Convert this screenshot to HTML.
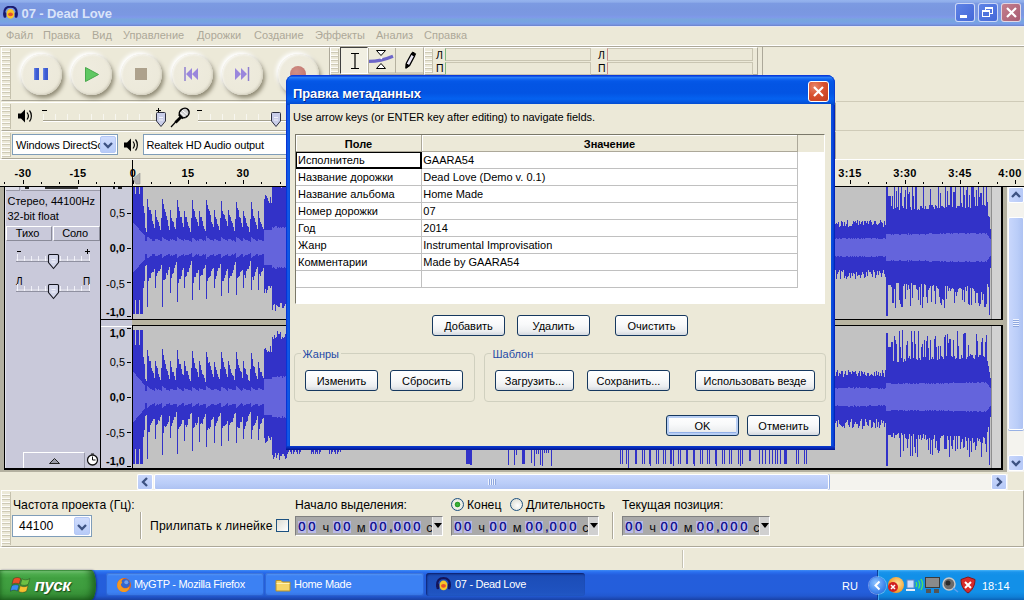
<!DOCTYPE html>
<html><head><meta charset="utf-8"><title>07 - Dead Love</title>
<style>
*{box-sizing:border-box;margin:0;padding:0}
html,body{width:1024px;height:600px;overflow:hidden;background:#ece9d8;font-family:"Liberation Sans",sans-serif;font-size:11px;color:#000}
.a{position:absolute}
#root{position:absolute;left:0;top:0;width:1024px;height:600px;overflow:hidden;background:#ece9d8}
/* title bar */
#tb{left:0;top:0;width:1024px;height:26px;background:linear-gradient(#95b3ee 0,#8fadea 2px,#7c9ae2 3.5px,#7a97e0 9px,#7b98e2 15px,#8099ea 17px,#78a5dd 19.5px,#77a3e3 22px,#7b9ce8 24px,#6f88d2 25.5px,#7088d2 26px)}
#tb .t{left:22px;top:5px;font-weight:bold;font-size:13px;color:#d9e4f9;letter-spacing:0px;white-space:nowrap}
.cb{top:3px;width:20px;height:19px;border:1px solid rgba(235,240,252,.8);border-radius:3px}
/* menu */
#menu{left:0;top:26px;width:1024px;height:20px;background:#ece9d8}
#menu span{position:absolute;top:3px;color:#aca899;font-size:11px;white-space:nowrap}
/* toolbars */
.tbar{border-top:1px solid #fff;border-left:1px solid #fff;border-right:1px solid #aca899;border-bottom:1px solid #aca899;background:#ece9d8}
.grab{background:repeating-linear-gradient(#ece9d8 0,#ece9d8 2px,#fdfcf8 2px,#fdfcf8 3px,#cdc9b6 3px,#cdc9b6 4px);border-right:1px solid #c5c1ad}
.rb{width:41px;height:41px;border-radius:50%;background:radial-gradient(circle at 40% 38%,#efecdf 0,#ece9da 70%,#e6e3d2 100%);box-shadow:2px 3px 4px rgba(120,115,92,.8),-2px -2px 4px rgba(255,255,255,1),-1px -1px 2px rgba(255,255,255,.9),inset -1px -1px 2px rgba(160,155,135,.35),inset 1px 1px 2px rgba(255,255,255,.7)}
.combo{background:#fff;border:1px solid #7f9db9;font-size:11px;white-space:nowrap;overflow:hidden}
.combo .dd{position:absolute;right:1px;top:1px;bottom:1px;width:16px;background:linear-gradient(#cfdcfd,#b7cbf8);border-radius:2px;border:1px solid #b5c8f5}
/* tracks */
.wv{position:absolute;left:0;top:0}
.xpbtn{position:absolute;height:21px;border:1px solid #16385f;border-radius:3px;background:linear-gradient(#fff 0,#f8f9fa 45%,#eceef0 80%,#d4d9e0 100%);font-size:11px;text-align:center;line-height:20.5px;white-space:nowrap}
.grp{position:absolute;border:1px solid #d0d0bf;border-radius:4px}
.grp b{position:absolute;top:-6px;left:5.5px;background:#ece9d8;padding:0 2px;color:#1f49a6;line-height:12px;font-weight:normal;font-size:11px}
.row{position:absolute;left:0;height:17px;width:501px;border-bottom:1px solid #c0c0c0;font-size:11px;line-height:16px;white-space:nowrap}
.row i{position:absolute;left:2px;font-style:normal}
.row u{position:absolute;left:127.3px;text-decoration:none}
.tc{position:absolute;height:20px;background:#a9a9a9;border:1px solid #808080;border-right-color:#fff;border-bottom-color:#fff}
.tc b{position:absolute;top:4.2px;width:8.2px;height:12px;font-weight:normal;font-size:13px;line-height:12px;text-align:center;color:#15158f;background:#b9b9e6;text-shadow:0 0 .5px #15158f}
.tc span.k{position:absolute;top:2.5px;font-size:13px;line-height:16px;color:#111}
.tc .d{position:absolute;right:0;top:0;width:9px;height:18px;background:#d0d0d0;box-shadow:-1px 0 0 #e8e8e8}
.tskb{position:absolute;top:573px;height:23px;border-radius:3px;background:linear-gradient(#5c9bf5 0,#3c81f3 3px,#3c81f3 19px,#3572e0 23px);color:#fff;font-size:11px;line-height:23px;letter-spacing:-.3px;white-space:nowrap;box-shadow:inset 0 0 0 1px rgba(20,60,170,.35)}

</style></head>
<body>
<div id="root">
<!-- ===== main title bar (inactive) ===== -->
<div id="tb" class="a">
  <svg class="a" style="left:3px;top:6px" width="15" height="14" viewBox="0 0 17 16">
    <path d="M1.5 11 C0.5 3 4 0.8 8.5 0.8 C13 0.8 16.5 3 15.5 11" fill="none" stroke="#1a1a70" stroke-width="2.4"/>
    <ellipse cx="8.5" cy="9" rx="4.6" ry="5.6" fill="#f6c62a"/>
    <ellipse cx="8.5" cy="9.5" rx="2.8" ry="2.2" fill="#e8502a"/>
    <rect x="0.5" y="7" width="3.2" height="6.5" rx="1.5" fill="#1a1a70"/>
    <rect x="13.3" y="7" width="3.2" height="6.5" rx="1.5" fill="#1a1a70"/>
  </svg>
  <div class="a t" style="left:21.5px;top:5.5px;letter-spacing:-.1px">07 - Dead Love</div>
  <div class="a cb" style="left:955px;background:linear-gradient(135deg,#5f83e6,#4468d8)"><div class="a" style="left:4px;top:11px;width:7px;height:3px;background:#fff"></div></div>
  <div class="a cb" style="left:978px;background:linear-gradient(135deg,#5f83e6,#4468d8)">
    <div class="a" style="left:6px;top:3px;width:8px;height:7px;border:1px solid #fff;border-top-width:2px"></div>
    <div class="a" style="left:3px;top:6px;width:8px;height:7px;border:1px solid #fff;border-top-width:2px;background:#4f73de"></div>
  </div>
  <div class="a cb" style="left:1001px;background:linear-gradient(135deg,#c47f8e,#a85c72)">
    <svg class="a" style="left:2.5px;top:2px" width="13" height="13"><path d="M2 2L11 11M11 2L2 11" stroke="#fff" stroke-width="2.2"/></svg>
  </div>
</div>
<div class="a" style="left:0;top:26px;width:1024px;height:1px;background:#e6e8f3;z-index:1"></div>
<!-- ===== menu ===== -->
<div id="menu" class="a">
  <span style="left:6px">Файл</span><span style="left:43px">Правка</span><span style="left:92px">Вид</span><span style="left:123px">Управление</span><span style="left:197px">Дорожки</span><span style="left:254px">Создание</span><span style="left:315px">Эффекты</span><span style="left:376px">Анализ</span><span style="left:424px">Справка</span>
</div>
<div class="a" style="left:0;top:45px;width:1024px;height:1px;background:#fff"></div>
<div class="a" style="left:0;top:46px;width:1024px;height:1px;background:#aca899"></div>

<!-- ===== transport toolbar ===== -->
<div class="a tbar" style="left:1px;top:47px;width:329px;height:54px"></div>
<div class="a grab" style="left:2px;top:49px;width:9px;height:50px"></div>
<div class="a rb" style="left:20.5px;top:54px"><div class="a" style="left:13.5px;top:14px;width:5px;height:12px;background:linear-gradient(90deg,#6f8ae6,#3f5fd6 40%,#3a57cc)"></div><div class="a" style="left:22px;top:14px;width:5px;height:12px;background:linear-gradient(90deg,#6f8ae6,#3f5fd6 40%,#3a57cc)"></div></div>
<div class="a rb" style="left:70.5px;top:54px"><svg class="a" style="left:13px;top:12px" width="16" height="17"><path d="M1.5 1.5L14.5 8.5L1.5 15.5Z" fill="#5fc862" stroke="#49a84d" stroke-width="1"/></svg></div>
<div class="a rb" style="left:121.0px;top:54px"><div class="a" style="left:14px;top:14px;width:12px;height:12px;background:#ada18c"></div></div>
<div class="a rb" style="left:171.5px;top:54px"><svg class="a" style="left:12px;top:13px" width="16" height="14"><path d="M1 0V14" stroke="#8f7fd0" stroke-width="1.5"/><path d="M8 1L2 7L8 13Z M14 1L8 7L14 13Z" fill="#9a86dc"/></svg></div>
<div class="a rb" style="left:221.7px;top:54px"><svg class="a" style="left:12px;top:13px" width="16" height="14"><path d="M14.5 0V14" stroke="#8f7fd0" stroke-width="1.5"/><path d="M1 1L7 7L1 13Z M7 1L13 7L7 13Z" fill="#9a86dc"/></svg></div>
<div class="a rb" style="left:278.4px;top:54px"><div class="a" style="left:12px;top:12px;width:16px;height:16px;border-radius:50%;background:radial-gradient(circle at 40% 35%,#d08f86,#bf6f68)"></div></div>

<!-- tools toolbar -->
<div class="a tbar" style="left:330px;top:47px;width:94px;height:28px"></div>
<div class="a grab" style="left:331px;top:49px;width:8px;height:24px"></div>
<div class="a" style="left:340px;top:47px;width:28px;height:27px;border:1px solid #404040;border-right-color:#fff;border-bottom-color:#fff;background:#f1efe2"></div>
<svg class="a" style="left:340px;top:47px" width="84" height="28" viewBox="0 0 84 28">
  <path d="M28.5 1V26H55.5V1M55.5 26H83.5V1" stroke="#b5b1a0" stroke-width="1" fill="none"/>
  <path d="M11 6.5H19M11 21.5H19M15 6.5V21.5" stroke="#000" stroke-width="1.2" fill="none"/>
  <path d="M29 14.3C37 14.3 44 13 53 9.2" stroke="#6d66c9" stroke-width="3.2" fill="none"/>
  <path d="M36.5 3.5H45.5L41 8.5Z M36.5 21.5H45.5L41 16.5Z" fill="#fff" stroke="#000" stroke-width="1"/>
  <circle cx="41.3" cy="11.3" r="1" fill="#fff"/>
  <path d="M66 21L66.3 16.2L71.3 7L74.6 9L69.6 18.4Z" fill="#ebe8f6" stroke="#000" stroke-width="1.3" stroke-linejoin="round"/>
  <path d="M66 21L66.3 16.8L69.3 18.6Z M71.3 7L72.6 5L75.6 6.8L74.6 9Z" fill="#000" stroke="#000" stroke-width="1"/>
</svg>
<!-- meter toolbar -->
<div class="a tbar" style="left:424px;top:47px;width:334px;height:28px"></div>
<div class="a grab" style="left:425px;top:49px;width:8px;height:24px"></div>
<div class="a" style="left:436px;top:48.5px;font-size:10.5px;line-height:13.5px">Л<br>П</div>
<div class="a" style="left:445px;top:48px;width:146px;height:13px;border:1px solid #c9c5b2;border-left:1px solid #7fb77f;background:#ebe8d7"></div>
<div class="a" style="left:445px;top:62px;width:146px;height:13px;border:1px solid #c9c5b2;border-left:1px solid #7fb77f;background:#ebe8d7"></div>
<div class="a" style="left:598px;top:48.5px;font-size:10.5px;line-height:13.5px">Л<br>П</div>
<div class="a" style="left:607px;top:48px;width:146px;height:13px;border:1px solid #c9c5b2;border-left:1px solid #c98a8a;background:#ebe8d7"></div>
<div class="a" style="left:607px;top:62px;width:146px;height:13px;border:1px solid #c9c5b2;border-left:1px solid #c98a8a;background:#ebe8d7"></div>
<div class="a" style="left:762px;top:47px;width:1px;height:28px;background:#aca899"></div>
<!-- right side faint lines (edit toolbar hidden etc) -->
<div class="a" style="left:836px;top:101px;width:188px;height:1px;background:#cfcbb8"></div>
<div class="a" style="left:836px;top:130px;width:188px;height:1px;background:#cfcbb8"></div>

<!-- ===== mixer toolbar ===== -->
<div class="a tbar" style="left:1px;top:102px;width:835px;height:29px"></div>
<div class="a grab" style="left:2px;top:104px;width:9px;height:25px"></div>
<svg class="a" style="left:17px;top:108px" width="17" height="16" viewBox="0 0 17 16">
  <path d="M1 5.5H4L8 1.5V14.5L4 10.5H1Z" fill="#000"/><path d="M10 4.5C11.6 6.5 11.6 9.5 10 11.5M12.5 2.5C15 5.5 15 10.5 12.5 13.5" stroke="#000" stroke-width="1.2" fill="none"/>
</svg>
<div class="a" style="left:42px;top:110px;width:5px;height:1px;background:#000"></div>
<div class="a" style="left:43px;top:114px;width:112px;height:7px;background:repeating-linear-gradient(90deg,#fff 0,#fff 1px,transparent 1px,transparent 12px);opacity:.6"></div>
<div class="a" style="left:43px;top:120px;width:114px;height:1px;background:#a5a18e"></div>
<div class="a" style="left:43px;top:121px;width:114px;height:1px;background:#fff"></div>
<div class="a" style="left:156px;top:110px;width:5px;height:1px;background:#000"></div><div class="a" style="left:158px;top:108px;width:1px;height:5px;background:#000"></div>
<svg class="a" style="left:155px;top:111px" width="13" height="17"><path d="M2.5 1.5H9.5Q10.5 1.5 10.5 2.5V10L6 15.5L1.5 10V2.5Q1.5 1.5 2.5 1.5Z" fill="#c9cde8" stroke="#2e3040" stroke-width="1"/><path d="M4 6.5H8M4 9H8" stroke="#f2f3fa"/></svg>
<svg class="a" style="left:170px;top:106px" width="22" height="22" viewBox="0 0 22 22"><path d="M1 21L7 14.5" stroke="#000" stroke-width="1.2"/><path d="M5.5 16.5L12 10" stroke="#000" stroke-width="2.8"/><ellipse cx="14.2" cy="7" rx="5.2" ry="4.4" transform="rotate(-40 14.2 7)" fill="#d0d0d0" stroke="#000" stroke-width="1.6"/><path d="M10.5 6.5L15.5 10.8M12 4.2L17.5 8.8" stroke="#fff" stroke-width="1"/><path d="M9 8.5L13 12.5" stroke="#000" stroke-width="2.2"/></svg>
<div class="a" style="left:197px;top:110px;width:5px;height:1px;background:#000"></div>
<div class="a" style="left:198px;top:114px;width:84px;height:7px;background:repeating-linear-gradient(90deg,#fff 0,#fff 1px,transparent 1px,transparent 12px);opacity:.6"></div>
<div class="a" style="left:198px;top:120px;width:88px;height:1px;background:#a5a18e"></div>
<div class="a" style="left:198px;top:121px;width:88px;height:1px;background:#fff"></div>
<svg class="a" style="left:270px;top:111px" width="13" height="17"><path d="M2.5 1.5H9.5Q10.5 1.5 10.5 2.5V10L6 15.5L1.5 10V2.5Q1.5 1.5 2.5 1.5Z" fill="#c9cde8" stroke="#2e3040" stroke-width="1"/><path d="M4 6.5H8M4 9H8" stroke="#f2f3fa"/></svg>

<!-- ===== device toolbar ===== -->
<div class="a tbar" style="left:1px;top:131px;width:835px;height:28px"></div>
<div class="a grab" style="left:2px;top:133px;width:9px;height:24px"></div>
<div class="a combo" style="left:12px;top:134px;width:106px;height:21px"><span class="a" style="left:3px;top:4px;letter-spacing:-.15px">Windows DirectSc</span><div class="dd"><svg class="a" style="left:2px;top:5px" width="10" height="7"><path d="M1 1L5 5L9 1" stroke="#3d5282" stroke-width="2.3" fill="none"/></svg></div></div>
<svg class="a" style="left:123px;top:137px" width="17" height="16" viewBox="0 0 17 16">
  <path d="M1 5.5H4L8 1.5V14.5L4 10.5H1Z" fill="#000"/><path d="M10 4.5C11.6 6.5 11.6 9.5 10 11.5M12.5 2.5C15 5.5 15 10.5 12.5 13.5" stroke="#000" stroke-width="1.2" fill="none"/>
</svg>
<div class="a combo" style="left:143px;top:134px;width:200px;height:21px"><span class="a" style="left:2.5px;top:4px;letter-spacing:-.13px">Realtek HD Audio output</span></div>

<!-- ===== time ruler ===== -->
<div class="a" style="left:0;top:159px;width:1024px;height:27px;background:#ece9d8;border-top:1px solid #fff"></div>
<div id="ruler" class="a" style="left:0;top:160px;width:1024px;height:26px;font-weight:bold;font-size:11px">
<div class="a" style="left:4px;top:22px;width:1px;height:2px;background:#000"></div>
<div class="a" style="left:23px;top:20px;width:1px;height:4px;background:#000"></div>
<div class="a" style="left:41px;top:22px;width:1px;height:2px;background:#000"></div>
<div class="a" style="left:59px;top:22px;width:1px;height:2px;background:#000"></div>
<div class="a rl" style="left:23px;top:6.5px;width:40px;margin-left:-20px;text-align:center;letter-spacing:.4px">-30</div>
<div class="a" style="left:78px;top:20px;width:1px;height:4px;background:#000"></div>
<div class="a" style="left:96px;top:22px;width:1px;height:2px;background:#000"></div>
<div class="a" style="left:114px;top:22px;width:1px;height:2px;background:#000"></div>
<div class="a rl" style="left:78px;top:6.5px;width:40px;margin-left:-20px;text-align:center;letter-spacing:.4px">-15</div>
<div class="a" style="left:133px;top:20px;width:1px;height:4px;background:#000"></div>
<div class="a" style="left:151px;top:22px;width:1px;height:2px;background:#000"></div>
<div class="a" style="left:170px;top:22px;width:1px;height:2px;background:#000"></div>
<div class="a rl" style="left:133px;top:6.5px;width:40px;margin-left:-20px;text-align:center;letter-spacing:.4px">0</div>
<div class="a" style="left:188px;top:20px;width:1px;height:4px;background:#000"></div>
<div class="a" style="left:206px;top:22px;width:1px;height:2px;background:#000"></div>
<div class="a" style="left:225px;top:22px;width:1px;height:2px;background:#000"></div>
<div class="a rl" style="left:188px;top:6.5px;width:40px;margin-left:-20px;text-align:center;letter-spacing:.4px">15</div>
<div class="a" style="left:243px;top:20px;width:1px;height:4px;background:#000"></div>
<div class="a" style="left:261px;top:22px;width:1px;height:2px;background:#000"></div>
<div class="a" style="left:280px;top:22px;width:1px;height:2px;background:#000"></div>
<div class="a rl" style="left:243px;top:6.5px;width:40px;margin-left:-20px;text-align:center;letter-spacing:.4px">30</div>
<div class="a" style="left:298px;top:20px;width:1px;height:4px;background:#000"></div>
<div class="a" style="left:317px;top:22px;width:1px;height:2px;background:#000"></div>
<div class="a" style="left:335px;top:22px;width:1px;height:2px;background:#000"></div>
<div class="a rl" style="left:298px;top:6.5px;width:40px;margin-left:-20px;text-align:center;letter-spacing:.4px">45</div>
<div class="a" style="left:353px;top:20px;width:1px;height:4px;background:#000"></div>
<div class="a" style="left:372px;top:22px;width:1px;height:2px;background:#000"></div>
<div class="a" style="left:390px;top:22px;width:1px;height:2px;background:#000"></div>
<div class="a" style="left:408px;top:20px;width:1px;height:4px;background:#000"></div>
<div class="a" style="left:427px;top:22px;width:1px;height:2px;background:#000"></div>
<div class="a" style="left:445px;top:22px;width:1px;height:2px;background:#000"></div>
<div class="a" style="left:464px;top:20px;width:1px;height:4px;background:#000"></div>
<div class="a" style="left:482px;top:22px;width:1px;height:2px;background:#000"></div>
<div class="a" style="left:500px;top:22px;width:1px;height:2px;background:#000"></div>
<div class="a" style="left:519px;top:20px;width:1px;height:4px;background:#000"></div>
<div class="a" style="left:537px;top:22px;width:1px;height:2px;background:#000"></div>
<div class="a" style="left:556px;top:22px;width:1px;height:2px;background:#000"></div>
<div class="a" style="left:574px;top:20px;width:1px;height:4px;background:#000"></div>
<div class="a" style="left:592px;top:22px;width:1px;height:2px;background:#000"></div>
<div class="a" style="left:611px;top:22px;width:1px;height:2px;background:#000"></div>
<div class="a" style="left:629px;top:20px;width:1px;height:4px;background:#000"></div>
<div class="a" style="left:647px;top:22px;width:1px;height:2px;background:#000"></div>
<div class="a" style="left:666px;top:22px;width:1px;height:2px;background:#000"></div>
<div class="a" style="left:684px;top:20px;width:1px;height:4px;background:#000"></div>
<div class="a" style="left:703px;top:22px;width:1px;height:2px;background:#000"></div>
<div class="a" style="left:721px;top:22px;width:1px;height:2px;background:#000"></div>
<div class="a" style="left:739px;top:20px;width:1px;height:4px;background:#000"></div>
<div class="a" style="left:758px;top:22px;width:1px;height:2px;background:#000"></div>
<div class="a" style="left:776px;top:22px;width:1px;height:2px;background:#000"></div>
<div class="a" style="left:794px;top:20px;width:1px;height:4px;background:#000"></div>
<div class="a" style="left:813px;top:22px;width:1px;height:2px;background:#000"></div>
<div class="a" style="left:831px;top:22px;width:1px;height:2px;background:#000"></div>
<div class="a" style="left:850px;top:20px;width:1px;height:4px;background:#000"></div>
<div class="a" style="left:868px;top:22px;width:1px;height:2px;background:#000"></div>
<div class="a" style="left:886px;top:22px;width:1px;height:2px;background:#000"></div>
<div class="a rl" style="left:850px;top:6.5px;width:40px;margin-left:-20px;text-align:center;letter-spacing:.4px">3:15</div>
<div class="a" style="left:905px;top:20px;width:1px;height:4px;background:#000"></div>
<div class="a" style="left:923px;top:22px;width:1px;height:2px;background:#000"></div>
<div class="a" style="left:942px;top:22px;width:1px;height:2px;background:#000"></div>
<div class="a rl" style="left:905px;top:6.5px;width:40px;margin-left:-20px;text-align:center;letter-spacing:.4px">3:30</div>
<div class="a" style="left:960px;top:20px;width:1px;height:4px;background:#000"></div>
<div class="a" style="left:978px;top:22px;width:1px;height:2px;background:#000"></div>
<div class="a" style="left:997px;top:22px;width:1px;height:2px;background:#000"></div>
<div class="a rl" style="left:960px;top:6.5px;width:40px;margin-left:-20px;text-align:center;letter-spacing:.4px">3:45</div>
<div class="a" style="left:1015px;top:20px;width:1px;height:4px;background:#000"></div>
<div class="a rl" style="left:1010px;top:6.5px;width:40px;margin-left:-20px;text-align:center;letter-spacing:.4px">4:00</div>
<div class="a" style="left:132px;top:0;width:1px;height:26px;background:#000"></div>
<svg class="a" style="left:133px;top:12.5px" width="8" height="12"><path d="M7 0V11H3L0 6Z" fill="#b0b0b0" stroke="#909090" stroke-width=".6"/></svg>
<div class="a" style="left:0;top:26px;width:1007px;height:1px;background:#000"></div>
</div>

<!-- ===== track area ===== -->
<div class="a" style="left:0;top:186px;width:1007px;height:286px;background:#b3b0a0"></div>
<div class="a" style="left:4px;top:186px;width:999px;height:284px;background:#000"></div>
<!-- label panel -->
<div class="a" style="left:5px;top:187px;width:95px;height:281px;background:#c9c9da;box-shadow:inset 1px 0 0 #e2e2ec"></div>
<!-- vruler -->
<div class="a" style="left:101px;top:187px;width:31px;height:132px;background:#cbccda"></div>
<div class="a" style="left:101px;top:320px;width:31px;height:6px;background:#c5c6d7"></div>
<div class="a" style="left:101px;top:326px;width:31px;height:1px;background:#fff"></div>
<div class="a" style="left:101px;top:327px;width:31px;height:141px;background:#cbccda"></div>
<!-- wave bg -->
<div class="a" style="left:133px;top:187px;width:868px;height:132px;background:#c2c2c2"></div>
<div class="a" style="left:132px;top:320px;width:871px;height:5px;background:#b9b5a2"></div>
<div class="a" style="left:133px;top:326px;width:868px;height:142px;background:#c2c2c2"></div>
<div class="a" style="left:991px;top:187px;width:10px;height:132px;background:#d2d2d2;border-left:1px solid #8f8f8f"></div><div class="a" style="left:991px;top:326px;width:10px;height:142px;background:#d2d2d2;border-left:1px solid #8f8f8f"></div>
<svg class="wv" width="1024" height="600" viewBox="0 0 1024 600" shape-rendering="crispEdges"><g transform="translate(0.5,0)" fill="none" stroke-width="1"><path stroke="#3232c8" d="M133 187V314M134 187V314M135 194V300M136 187V314M137 187V314M138 187V314M139 194V300M140 187V314M141 187V314M142 187V314M143 206V288M144 213V281M145 228V266M146 232V265M147 199V307M148 207V281M149 210V278M150 210V278M151 214V273M152 221V272M153 224V272M154 228V269M155 210V288M156 217V276M157 220V273M158 222V271M159 226V271M160 230V269M161 218V265M162 199V307M163 204V280M164 209V280M165 212V279M166 216V273M167 220V275M168 226V270M169 230V267M170 210V293M171 218V278M172 221V274M173 222V273M174 227V268M175 229V265M176 218V262M177 200V302M178 207V283M179 211V279M180 217V279M181 217V276M182 223V270M183 227V268M184 211V288M185 217V277M186 217V276M187 222V272M188 226V272M189 228V268M190 232V265M191 218V261M192 200V300M193 209V283M194 211V277M195 217V277M196 219V273M197 222V273M198 226V270M199 211V290M200 217V276M201 217V275M202 221V275M203 226V269M204 229V268M205 231V265M206 200V299M207 205V281M208 209V278M209 211V277M210 215V276M211 222V271M212 224V269M213 227V268M214 210V288M215 217V279M216 219V276M217 224V271M218 226V268M219 230V268M220 218V264M221 201V296M222 211V281M223 214V281M224 215V278M225 219V275M226 221V271M227 226V269M228 210V293M229 215V278M230 217V276M231 221V276M232 223V273M233 227V270M234 231V265M235 219V262M236 202V295M237 208V278M238 210V277M239 217V276M240 218V272M241 223V271M242 227V270M243 211V288M244 216V275M245 218V278M246 223V271M247 226V269M248 227V269M249 232V266M250 219V261M251 202V290M252 209V277M253 216V280M254 218V276M255 222V272M256 225V269M257 229V267M258 211V290M259 218V274M260 222V276M261 224V272M262 227V271M263 229V268M264 199V293M265 195V289M266 196V293M267 198V290M268 201V286M269 203V286M270 197V288M271 203V286M272 187V310M273 187V305M274 187V304M275 187V311M276 187V305M277 187V306M278 187V307M279 187V307M280 187V303M281 188V303M282 187V308M283 187V308M284 187V306M285 187V304M286 187V303M287 187V308M288 187V304M289 187V310M290 187V308M291 187V308M292 188V304M293 187V310M294 187V308M295 187V303M296 187V307M297 187V303M298 187V303M299 187V304M300 187V307M301 187V308M302 187V308M303 187V305M304 187V307M305 188V305M306 187V308M307 187V307M308 187V310M309 187V310M310 187V309M311 187V305M312 187V304M313 187V307M314 187V309M315 187V309M316 187V307M317 188V307M318 187V304M319 187V310M320 187V310M321 187V309M322 187V306M323 187V308M324 187V305M325 187V310M326 187V305M327 187V304M328 187V310M329 187V310M330 202V294M331 206V294M332 203V294M333 202V291M334 206V295M335 205V292M336 204V291M337 201V296M338 204V293M339 204V293M340 203V290M341 205V290M342 200V292M343 205V295M344 199V292M345 205V290M346 205V291M347 205V291M348 204V293M349 200V294M350 203V292M351 202V292M352 204V289M353 204V296M354 205V292M355 202V295M356 205V291M357 204V292M358 203V295M359 200V295M360 206V289M361 201V295M362 203V293M363 206V292M364 200V295M365 200V296M366 204V290M367 205V293M368 201V295M369 201V293M370 201V292M371 202V289M372 201V291M373 200V293M374 204V290M375 204V293M376 201V290M377 206V293M378 202V292M379 205V293M380 206V291M381 203V296M382 202V295M383 203V291M384 204V296M385 201V291M386 206V292M387 201V292M388 204V294M389 200V290M390 206V291M391 203V294M392 205V294M393 201V292M394 205V296M395 204V295M396 205V290M397 201V291M398 200V292M399 205V290M400 203V293M401 200V290M402 203V290M403 199V290M404 206V289M405 203V295M406 200V294M407 199V295M408 204V290M409 200V294M410 206V293M411 203V291M412 204V290M413 206V291M414 204V295M415 205V296M416 205V291M417 200V295M418 203V289M419 203V291M420 200V290M421 204V295M422 206V292M423 200V294M424 206V289M425 206V295M426 204V294M427 200V291M428 204V296M429 202V291M430 201V291M431 204V289M432 201V295M433 202V295M434 206V291M435 203V296M436 200V292M437 204V292M438 203V295M439 205V294M440 201V295M441 201V293M442 204V291M443 204V294M444 206V290M445 201V291M446 206V289M447 202V291M448 199V295M449 199V291M450 206V290M451 203V294M452 203V291M453 203V293M454 201V294M455 200V293M456 205V295M457 204V293M458 204V294M459 205V291M460 204V290M461 200V293M462 204V292M463 199V292M464 205V294M465 202V296M466 205V292M467 200V295M468 200V289M469 204V290M470 205V296M471 202V295M472 204V295M473 203V291M474 201V295M475 205V293M476 202V290M477 204V290M478 205V291M479 202V293M480 205V289M481 204V294M482 205V291M483 205V294M484 202V289M485 205V292M486 202V293M487 205V290M488 201V292M489 204V291M490 200V291M491 202V291M492 203V295M493 199V291M494 205V294M495 205V289M496 200V292M497 200V292M498 200V292M499 205V289M500 202V293M501 200V290M502 202V291M503 203V290M504 204V292M505 200V290M506 203V294M507 199V290M508 205V295M509 199V292M510 206V295M511 203V295M512 202V295M513 205V294M514 205V292M515 200V295M516 205V290M517 203V292M518 203V290M519 204V294M520 200V289M521 202V294M522 206V295M523 205V293M524 202V293M525 204V292M526 202V292M527 202V292M528 203V289M529 202V292M530 204V294M531 201V292M532 205V292M533 205V290M534 203V290M535 203V292M536 206V293M537 206V294M538 201V292M539 206V292M540 203V295M541 205V295M542 199V294M543 200V290M544 199V292M545 199V295M546 205V294M547 200V289M548 204V294M549 205V295M550 204V295M551 205V292M552 200V290M553 204V292M554 204V289M555 205V290M556 200V294M557 200V290M558 201V290M559 202V293M560 204V295M561 202V293M562 200V290M563 199V293M564 203V294M565 204V296M566 202V291M567 201V292M568 205V294M569 206V295M570 204V293M571 199V293M572 202V291M573 206V289M574 205V293M575 203V292M576 200V290M577 205V293M578 206V289M579 204V290M580 204V290M581 202V293M582 205V293M583 203V290M584 200V291M585 205V290M586 202V295M587 201V292M588 204V289M589 202V293M590 204V293M591 203V295M592 201V291M593 200V289M594 202V292M595 204V289M596 201V289M597 202V295M598 205V290M599 202V292M600 202V295M601 205V291M602 204V289M603 200V294M604 201V289M605 200V294M606 203V294M607 203V290M608 205V291M609 206V291M610 201V294M611 200V294M612 204V293M613 203V294M614 202V291M615 202V296M616 205V295M617 206V291M618 204V294M619 200V294M620 204V295M621 204V291M622 200V293M623 201V293M624 199V292M625 200V294M626 200V292M627 201V293M628 204V290M629 202V289M630 200V290M631 206V290M632 200V291M633 205V289M634 206V294M635 202V294M636 201V289M637 202V291M638 200V295M639 200V289M640 200V295M641 200V290M642 205V290M643 206V295M644 200V293M645 200V293M646 204V290M647 205V294M648 205V291M649 203V289M650 204V291M651 201V291M652 204V296M653 203V295M654 202V289M655 203V292M656 201V291M657 201V293M658 205V295M659 205V295M660 205V289M661 205V294M662 199V289M663 203V292M664 201V290M665 203V291M666 200V291M667 200V291M668 205V294M669 203V290M670 202V289M671 201V294M672 201V293M673 204V292M674 203V295M675 206V295M676 206V290M677 204V295M678 203V292M679 200V291M680 203V293M681 201V294M682 202V291M683 204V290M684 200V293M685 201V290M686 203V294M687 202V290M688 203V295M689 204V290M690 204V294M691 200V290M692 205V291M693 204V293M694 205V291M695 205V296M696 201V290M697 199V290M698 203V296M699 201V294M700 203V290M701 202V290M702 205V292M703 206V292M704 201V294M705 203V293M706 203V290M707 202V292M708 201V295M709 203V293M710 201V292M711 205V294M712 200V294M713 201V295M714 201V293M715 203V291M716 202V290M717 203V294M718 201V293M719 204V292M720 203V293M721 203V294M722 200V290M723 202V294M724 203V292M725 199V289M726 202V290M727 201V295M728 203V290M729 202V293M730 201V292M731 202V295M732 203V292M733 200V290M734 201V292M735 201V290M736 199V291M737 206V291M738 203V289M739 203V292M740 201V291M741 204V290M742 201V295M743 202V290M744 201V292M745 205V290M746 201V294M747 202V292M748 202V290M749 199V291M750 202V295M751 200V292M752 204V293M753 205V295M754 204V295M755 204V291M756 204V292M757 205V289M758 201V291M759 204V291M760 203V292M761 202V293M762 204V295M763 200V289M764 200V295M765 201V290M766 200V293M767 206V289M768 200V293M769 204V290M770 205V291M771 201V291M772 205V295M773 201V290M774 200V293M775 201V294M776 200V294M777 200V290M778 201V293M779 201V292M780 200V293M781 204V291M782 205V292M783 206V292M784 205V292M785 203V293M786 200V289M787 200V292M788 202V293M789 200V291M790 203V296M791 206V293M792 202V289M793 202V294M794 200V291M795 199V292M796 203V295M797 206V294M798 202V291M799 200V291M800 203V293M801 201V290M802 203V292M803 202V295M804 204V295M805 203V292M806 204V292M807 199V293M808 201V291M809 204V291M810 202V293M811 201V289M812 201V295M813 202V289M814 204V289M815 205V295M816 202V293M817 201V295M818 202V293M819 202V294M820 202V294M821 205V294M822 203V294M823 205V290M824 206V294M825 200V293M826 204V295M827 201V293M828 204V291M829 203V291M830 203V293M831 200V289M832 202V289M833 205V294M834 202V295M835 224V270M836 223V279M837 224V274M838 222V272M839 227V270M840 226V279M841 221V271M842 222V272M843 226V270M844 222V278M845 226V276M846 224V279M847 220V277M848 227V276M849 226V273M850 226V278M851 226V273M852 224V276M853 221V273M854 222V274M855 221V279M856 223V272M857 220V276M858 225V275M859 221V275M860 224V278M861 222V275M862 221V272M863 225V274M864 221V278M865 221V277M866 223V272M867 221V276M868 224V270M869 221V272M870 220V272M871 222V274M872 225V277M873 224V270M874 221V272M875 221V278M876 224V275M877 225V271M878 224V275M879 223V271M880 220V273M881 222V277M882 223V273M883 227V270M884 221V274M885 225V277M886 187V316M887 187V316M888 196V285M889 196V285M890 196V285M891 206V287M892 196V303M893 209V303M894 187V289M895 208V308M896 191V283M897 207V283M898 187V283M899 210V300M900 193V304M901 187V307M902 206V307M903 208V286M904 197V284M905 190V299M906 209V284M907 187V290M908 194V285M909 192V289M910 207V306M911 210V283M912 187V298M913 196V285M914 209V285M915 187V285M916 187V289M917 210V290M918 209V300M919 210V287M920 206V305M921 206V284M922 208V308M923 187V297M924 209V284M925 206V285M926 209V297M927 209V303M928 209V290M929 205V288M930 189V286M931 205V302M932 205V286M933 207V285M934 209V291M935 205V304M936 206V286M937 208V288M938 187V289M939 208V297M940 193V303M941 206V305M942 206V299M943 207V300M944 208V308M945 187V286M946 207V299M947 191V286M948 205V291M949 205V288M950 187V291M951 187V289M952 207V288M953 192V289M954 192V303M955 187V292M956 208V296M957 206V292M958 206V289M959 206V288M960 187V288M961 203V289M962 207V300M963 187V290M964 195V302M965 208V287M966 190V291M967 187V286M968 207V304M969 195V305M970 208V288M971 187V305M972 187V288M973 187V289M974 197V291M975 206V303M976 190V293M977 206V293M978 187V303M979 197V306M980 193V304M981 193V292M982 205V300M983 187V294M984 205V307M985 206V307M986 187V304M987 202V284M988 216V287M989 217V315M990 229V268"/><path stroke="#6464dc" d="M133 223V272M134 224V271M135 225V270M136 226V269M137 227V268M138 228V267M139 230V265M140 231V264M141 232V263M142 233V262M143 234V261M144 235V260M145 241V254M146 241V254M147 237V258M148 237V258M149 238V257M150 239V256M151 239V256M152 241V254M153 241V254M154 241V254M155 239V256M156 239V256M157 239V256M158 240V255M159 240V255M160 241V254M161 241V254M162 237V258M163 238V257M164 239V256M165 239V256M166 240V255M167 240V255M168 241V254M169 241V254M170 239V256M171 240V255M172 239V256M173 240V255M174 240V255M175 241V254M176 241V254M177 237V258M178 238V257M179 239V256M180 239V256M181 240V255M182 240V255M183 241V254M184 239V256M185 240V255M186 240V255M187 240V255M188 240V255M189 241V254M190 241V254M191 242V253M192 238V257M193 238V257M194 239V256M195 240V255M196 241V254M197 240V255M198 241V254M199 239V256M200 239V256M201 239V256M202 240V255M203 241V254M204 240V255M205 241V254M206 236V259M207 238V257M208 238V257M209 239V256M210 240V255M211 240V255M212 240V255M213 241V254M214 239V256M215 239V256M216 240V255M217 240V255M218 241V254M219 241V254M220 241V254M221 237V258M222 238V257M223 239V256M224 239V256M225 240V255M226 240V255M227 241V254M228 239V256M229 239V256M230 239V256M231 240V255M232 241V254M233 240V255M234 241V254M235 242V253M236 237V258M237 238V257M238 238V257M239 239V256M240 240V255M241 241V254M242 241V254M243 238V257M244 239V256M245 240V255M246 240V255M247 240V255M248 241V254M249 241V254M250 242V253M251 237V258M252 238V257M253 239V256M254 239V256M255 240V255M256 241V254M257 241V254M258 239V256M259 240V255M260 240V255M261 240V255M262 241V254M263 241V254M264 230V265M265 230V265M266 230V265M267 230V265M268 230V265M269 230V265M270 230V265M271 230V265M272 227V268M273 228V267M274 227V268M275 226V269M276 226V269M277 228V267M278 227V268M279 228V267M280 227V268M281 228V267M282 227V268M283 227V268M284 228V267M285 227V268M286 226V269M287 227V268M288 227V268M289 227V268M290 226V269M291 228V267M292 227V268M293 227V268M294 227V268M295 227V268M296 227V268M297 227V268M298 228V267M299 227V268M300 227V268M301 227V268M302 228V267M303 227V268M304 228V267M305 227V268M306 228V267M307 227V268M308 228V267M309 228V267M310 226V269M311 228V267M312 227V268M313 226V269M314 227V268M315 228V267M316 228V267M317 227V268M318 227V268M319 228V267M320 228V267M321 226V269M322 227V268M323 227V268M324 228V267M325 228V267M326 228V267M327 227V268M328 226V269M329 226V269M330 230V265M331 230V265M332 230V265M333 230V265M334 230V265M335 230V265M336 230V265M337 230V265M338 230V265M339 230V265M340 230V265M341 230V265M342 230V265M343 230V265M344 230V265M345 230V265M346 230V265M347 230V265M348 230V265M349 230V265M350 230V265M351 230V265M352 230V265M353 230V265M354 230V265M355 230V265M356 230V265M357 230V265M358 230V265M359 230V265M360 230V265M361 230V265M362 230V265M363 230V265M364 230V265M365 230V265M366 230V265M367 230V265M368 230V265M369 230V265M370 230V265M371 230V265M372 230V265M373 230V265M374 230V265M375 230V265M376 230V265M377 230V265M378 230V265M379 230V265M380 230V265M381 230V265M382 230V265M383 230V265M384 230V265M385 230V265M386 230V265M387 230V265M388 230V265M389 230V265M390 230V265M391 230V265M392 230V265M393 230V265M394 230V265M395 230V265M396 230V265M397 230V265M398 230V265M399 230V265M400 230V265M401 230V265M402 230V265M403 230V265M404 230V265M405 230V265M406 230V265M407 230V265M408 230V265M409 230V265M410 230V265M411 230V265M412 230V265M413 230V265M414 230V265M415 230V265M416 230V265M417 230V265M418 230V265M419 230V265M420 230V265M421 230V265M422 230V265M423 230V265M424 230V265M425 230V265M426 230V265M427 230V265M428 230V265M429 230V265M430 230V265M431 230V265M432 230V265M433 230V265M434 230V265M435 230V265M436 230V265M437 230V265M438 230V265M439 230V265M440 230V265M441 230V265M442 230V265M443 230V265M444 230V265M445 230V265M446 230V265M447 230V265M448 230V265M449 230V265M450 230V265M451 230V265M452 230V265M453 230V265M454 230V265M455 230V265M456 230V265M457 230V265M458 230V265M459 230V265M460 230V265M461 230V265M462 230V265M463 230V265M464 230V265M465 230V265M466 230V265M467 230V265M468 230V265M469 230V265M470 230V265M471 230V265M472 230V265M473 230V265M474 230V265M475 230V265M476 230V265M477 230V265M478 230V265M479 230V265M480 230V265M481 230V265M482 230V265M483 230V265M484 230V265M485 230V265M486 230V265M487 230V265M488 230V265M489 230V265M490 230V265M491 230V265M492 230V265M493 230V265M494 230V265M495 230V265M496 230V265M497 230V265M498 230V265M499 230V265M500 230V265M501 230V265M502 230V265M503 230V265M504 230V265M505 230V265M506 230V265M507 230V265M508 230V265M509 230V265M510 230V265M511 230V265M512 230V265M513 230V265M514 230V265M515 230V265M516 230V265M517 230V265M518 230V265M519 230V265M520 230V265M521 230V265M522 230V265M523 230V265M524 230V265M525 230V265M526 230V265M527 230V265M528 230V265M529 230V265M530 230V265M531 230V265M532 230V265M533 230V265M534 230V265M535 230V265M536 230V265M537 230V265M538 230V265M539 230V265M540 230V265M541 230V265M542 230V265M543 230V265M544 230V265M545 230V265M546 230V265M547 230V265M548 230V265M549 230V265M550 230V265M551 230V265M552 230V265M553 230V265M554 230V265M555 230V265M556 230V265M557 230V265M558 230V265M559 230V265M560 230V265M561 230V265M562 230V265M563 230V265M564 230V265M565 230V265M566 230V265M567 230V265M568 230V265M569 230V265M570 230V265M571 230V265M572 230V265M573 230V265M574 230V265M575 230V265M576 230V265M577 230V265M578 230V265M579 230V265M580 230V265M581 230V265M582 230V265M583 230V265M584 230V265M585 230V265M586 230V265M587 230V265M588 230V265M589 230V265M590 230V265M591 230V265M592 230V265M593 230V265M594 230V265M595 230V265M596 230V265M597 230V265M598 230V265M599 230V265M600 230V265M601 230V265M602 230V265M603 230V265M604 230V265M605 230V265M606 230V265M607 230V265M608 230V265M609 230V265M610 230V265M611 230V265M612 230V265M613 230V265M614 230V265M615 230V265M616 230V265M617 230V265M618 230V265M619 230V265M620 230V265M621 230V265M622 230V265M623 230V265M624 230V265M625 230V265M626 230V265M627 230V265M628 230V265M629 230V265M630 230V265M631 230V265M632 230V265M633 230V265M634 230V265M635 230V265M636 230V265M637 230V265M638 230V265M639 230V265M640 230V265M641 230V265M642 230V265M643 230V265M644 230V265M645 230V265M646 230V265M647 230V265M648 230V265M649 230V265M650 230V265M651 230V265M652 230V265M653 230V265M654 230V265M655 230V265M656 230V265M657 230V265M658 230V265M659 230V265M660 230V265M661 230V265M662 230V265M663 230V265M664 230V265M665 230V265M666 230V265M667 230V265M668 230V265M669 230V265M670 230V265M671 230V265M672 230V265M673 230V265M674 230V265M675 230V265M676 230V265M677 230V265M678 230V265M679 230V265M680 230V265M681 230V265M682 230V265M683 230V265M684 230V265M685 230V265M686 230V265M687 230V265M688 230V265M689 230V265M690 230V265M691 230V265M692 230V265M693 230V265M694 230V265M695 230V265M696 230V265M697 230V265M698 230V265M699 230V265M700 230V265M701 230V265M702 230V265M703 230V265M704 230V265M705 230V265M706 230V265M707 230V265M708 230V265M709 230V265M710 230V265M711 230V265M712 230V265M713 230V265M714 230V265M715 230V265M716 230V265M717 230V265M718 230V265M719 230V265M720 230V265M721 230V265M722 230V265M723 230V265M724 230V265M725 230V265M726 230V265M727 230V265M728 230V265M729 230V265M730 230V265M731 230V265M732 230V265M733 230V265M734 230V265M735 230V265M736 230V265M737 230V265M738 230V265M739 230V265M740 230V265M741 230V265M742 230V265M743 230V265M744 230V265M745 230V265M746 230V265M747 230V265M748 230V265M749 230V265M750 230V265M751 230V265M752 230V265M753 230V265M754 230V265M755 230V265M756 230V265M757 230V265M758 230V265M759 230V265M760 230V265M761 230V265M762 230V265M763 230V265M764 230V265M765 230V265M766 230V265M767 230V265M768 230V265M769 230V265M770 230V265M771 230V265M772 230V265M773 230V265M774 230V265M775 230V265M776 230V265M777 230V265M778 230V265M779 230V265M780 230V265M781 230V265M782 230V265M783 230V265M784 230V265M785 230V265M786 230V265M787 230V265M788 230V265M789 230V265M790 230V265M791 230V265M792 230V265M793 230V265M794 230V265M795 230V265M796 230V265M797 230V265M798 230V265M799 230V265M800 230V265M801 230V265M802 230V265M803 230V265M804 230V265M805 230V265M806 230V265M807 230V265M808 230V265M809 230V265M810 230V265M811 230V265M812 230V265M813 230V265M814 230V265M815 230V265M816 230V265M817 230V265M818 230V265M819 230V265M820 230V265M821 230V265M822 230V265M823 230V265M824 230V265M825 230V265M826 230V265M827 230V265M828 230V265M829 230V265M830 230V265M831 230V265M832 230V265M833 230V265M834 230V265M835 239V256M836 238V257M837 239V256M838 239V256M839 238V257M840 239V256M841 239V256M842 238V257M843 238V257M844 238V257M845 238V257M846 239V256M847 239V256M848 238V257M849 238V257M850 239V256M851 238V257M852 239V256M853 238V257M854 239V256M855 238V257M856 239V256M857 238V257M858 238V257M859 239V256M860 239V256M861 238V257M862 239V256M863 238V257M864 239V256M865 238V257M866 238V257M867 238V257M868 238V257M869 238V257M870 238V257M871 239V256M872 238V257M873 238V257M874 238V257M875 238V257M876 239V256M877 238V257M878 239V256M879 239V256M880 239V256M881 239V256M882 239V256M883 238V257M884 238V257M885 239V256M886 234V261M887 234V261M888 234V261M889 234V261M890 234V261M891 235V260M892 234V261M893 235V260M894 234V261M895 234V261M896 234V261M897 234V261M898 234V261M899 235V260M900 235V260M901 234V261M902 234V261M903 234V261M904 234V261M905 234V261M906 234V261M907 235V260M908 233V262M909 235V260M910 234V261M911 235V260M912 234V261M913 234V261M914 234V261M915 234V261M916 234V261M917 234V261M918 234V261M919 235V260M920 234V261M921 234V261M922 234V261M923 234V261M924 234V261M925 235V260M926 234V261M927 234V261M928 234V261M929 233V262M930 233V262M931 233V262M932 234V261M933 234V261M934 234V261M935 234V261M936 234V261M937 234V261M938 234V261M939 234V261M940 233V262M941 234V261M942 234V261M943 233V262M944 234V261M945 234V261M946 233V262M947 233V262M948 233V262M949 233V262M950 234V261M951 233V262M952 234V261M953 233V262M954 233V262M955 233V262M956 233V262M957 233V262M958 234V261M959 233V262M960 233V262M961 233V262M962 233V262M963 233V262M964 233V262M965 234V261M966 234V261M967 233V262M968 233V262M969 234V261M970 233V262M971 233V262M972 233V262M973 233V262M974 233V262M975 233V262M976 234V261M977 234V261M978 234V261M979 233V262M980 233V262M981 234V261M982 233V262M983 233V262M984 233V262M985 234V261M986 233V262M987 235V260M988 236V259M989 238V257M990 239V256"/><path stroke="#3232c8" d="M133 330V464M134 330V464M135 345V449M136 330V464M137 330V464M138 330V464M139 345V449M140 330V464M141 330V464M142 330V464M143 357V437M144 364V430M145 379V416M146 381V415M147 350V459M148 356V432M149 361V432M150 361V425M151 368V423M152 371V421M153 373V419M154 378V419M155 361V439M156 366V425M157 368V424M158 374V420M159 377V421M160 380V417M161 368V415M162 349V455M163 355V433M164 360V426M165 364V427M166 369V426M167 371V424M168 375V422M169 379V416M170 361V438M171 367V426M172 372V423M173 372V420M174 376V417M175 380V417M176 368V412M177 350V454M178 359V429M179 364V427M180 364V426M181 369V424M182 374V420M183 375V420M184 361V441M185 366V425M186 371V427M187 371V425M188 375V419M189 379V419M190 381V414M191 368V413M192 351V451M193 358V428M194 363V427M195 368V423M196 369V425M197 372V423M198 377V417M199 361V442M200 365V424M201 370V423M202 374V424M203 375V419M204 378V417M205 382V414M206 352V447M207 357V430M208 363V428M209 362V429M210 366V427M211 370V420M212 374V419M213 377V417M214 362V443M215 367V426M216 370V423M217 374V421M218 377V417M219 379V416M220 369V413M221 352V446M222 358V428M223 362V426M224 367V426M225 369V425M226 374V424M227 377V421M228 361V441M229 365V425M230 369V423M231 373V422M232 375V422M233 376V418M234 380V414M235 369V413M236 352V443M237 359V427M238 365V428M239 368V428M240 371V422M241 372V422M242 378V417M243 361V439M244 368V429M245 369V426M246 374V422M247 375V421M248 380V416M249 381V414M250 369V412M251 353V439M252 359V430M253 366V426M254 367V425M255 373V423M256 376V420M257 379V416M258 362V440M259 368V429M260 372V424M261 372V423M262 376V419M263 378V418M264 349V438M265 348V443M266 350V442M267 352V441M268 351V436M269 352V438M270 346V440M271 352V437M272 337V455M273 339V459M274 335V457M275 338V453M276 337V458M277 331V455M278 334V453M279 334V460M280 332V456M281 339V456M282 337V454M283 338V454M284 337V456M285 334V459M286 338V458M287 334V454M288 331V452M289 338V449M290 333V452M291 336V454M292 336V449M293 339V454M294 334V452M295 334V449M296 339V452M297 330V454M298 333V449M299 338V454M300 339V452M301 334V449M302 333V449M303 332V449M304 332V449M305 332V449M306 337V449M307 338V449M308 333V449M309 330V449M310 339V449M311 339V454M312 338V452M313 338V454M314 331V449M315 332V454M316 335V452M317 332V454M318 331V449M319 339V454M320 331V452M321 336V449M322 334V449M323 337V449M324 338V449M325 337V449M326 334V449M327 331V449M328 332V449M329 335V454M330 352V443M331 354V454M332 351V452M333 351V441M334 352V452M335 356V454M336 350V440M337 357V454M338 350V452M339 351V439M340 352V452M341 356V443M342 356V441M343 351V443M344 351V445M345 357V440M346 352V443M347 357V442M348 355V441M349 356V439M350 350V441M351 351V439M352 354V439M353 354V440M354 352V439M355 352V442M356 356V441M357 354V445M358 355V440M359 350V444M360 352V440M361 356V440M362 356V439M363 353V441M364 353V441M365 357V443M366 352V442M367 353V443M368 350V444M369 352V441M370 355V441M371 350V441M372 354V441M373 356V445M374 357V443M375 351V440M376 353V441M377 355V440M378 356V444M379 352V445M380 357V443M381 355V443M382 353V441M383 350V438M384 352V444M385 353V442M386 350V440M387 353V444M388 354V443M389 354V442M390 353V443M391 355V443M392 353V440M393 353V440M394 351V442M395 352V442M396 354V440M397 356V445M398 353V442M399 353V444M400 355V440M401 351V442M402 353V444M403 351V444M404 357V441M405 351V444M406 356V439M407 355V439M408 354V444M409 353V442M410 356V441M411 350V443M412 354V442M413 351V444M414 356V443M415 354V442M416 355V441M417 355V441M418 357V440M419 353V439M420 356V443M421 355V441M422 355V444M423 356V443M424 351V440M425 354V444M426 353V441M427 357V441M428 354V443M429 355V441M430 353V444M431 354V441M432 353V445M433 356V445M434 352V441M435 352V441M436 356V444M437 354V442M438 354V445M439 352V439M440 353V442M441 354V444M442 354V442M443 351V441M444 354V442M445 351V443M446 352V441M447 357V443M448 353V444M449 352V439M450 355V439M451 351V439M452 356V444M453 353V439M454 352V443M455 354V439M456 352V441M457 353V445M458 351V444M459 356V441M460 353V438M461 350V440M462 355V441M463 355V444M464 353V442M465 354V439M466 355V464M467 351V464M468 355V464M469 356V464M470 354V465M471 354V465M472 354V444M473 356V445M474 353V439M475 355V442M476 354V442M477 355V440M478 352V440M479 352V444M480 353V442M481 351V441M482 351V439M483 354V443M484 357V444M485 356V443M486 356V445M487 353V444M488 354V443M489 352V440M490 355V444M491 356V445M492 355V439M493 356V444M494 350V441M495 352V440M496 351V443M497 356V439M498 352V439M499 351V440M500 355V442M501 355V442M502 356V445M503 355V444M504 356V444M505 350V441M506 357V441M507 353V440M508 353V465M509 354V443M510 354V443M511 356V444M512 356V445M513 350V445M514 353V465M515 355V444M516 354V455M517 356V442M518 351V443M519 353V439M520 356V440M521 351V444M522 355V464M523 357V464M524 350V464M525 351V443M526 357V441M527 354V440M528 352V440M529 352V440M530 356V442M531 356V463M532 352V443M533 354V439M534 353V466M535 353V439M536 353V454M537 354V443M538 356V454M539 351V441M540 351V465M541 354V439M542 356V466M543 356V442M544 353V453M545 354V440M546 353V453M547 354V440M548 354V453M549 356V440M550 351V442M551 351V466M552 351V442M553 352V442M554 352V440M555 352V439M556 355V439M557 354V442M558 355V445M559 356V442M560 355V443M561 352V443M562 356V440M563 353V445M564 357V443M565 352V444M566 355V444M567 354V445M568 357V445M569 354V441M570 356V440M571 352V443M572 356V441M573 356V440M574 355V441M575 350V445M576 352V442M577 354V444M578 351V444M579 353V440M580 353V444M581 352V439M582 352V441M583 356V445M584 352V444M585 356V444M586 351V445M587 352V444M588 351V442M589 354V444M590 352V444M591 355V445M592 353V445M593 356V445M594 352V440M595 351V440M596 356V442M597 355V442M598 351V443M599 352V441M600 352V444M601 352V445M602 351V441M603 356V443M604 351V441M605 353V444M606 352V438M607 354V439M608 356V444M609 354V443M610 354V441M611 355V441M612 351V443M613 355V439M614 355V443M615 354V443M616 351V439M617 352V439M618 351V440M619 355V445M620 354V464M621 351V443M622 351V464M623 353V445M624 353V445M625 356V444M626 356V464M627 357V440M628 351V468M629 351V440M630 354V439M631 353V444M632 353V441M633 351V445M634 352V439M635 353V464M636 350V464M637 352V443M638 354V442M639 352V445M640 354V441M641 350V439M642 351V464M643 353V441M644 352V464M645 352V444M646 357V441M647 356V445M648 351V439M649 353V464M650 357V466M651 352V443M652 355V444M653 355V442M654 354V445M655 352V444M656 352V464M657 350V443M658 352V464M659 356V442M660 351V444M661 355V439M662 353V444M663 356V464M664 356V441M665 356V464M666 354V445M667 350V440M668 355V445M669 356V441M670 354V464M671 355V464M672 354V445M673 355V466M674 351V442M675 351V443M676 352V441M677 356V444M678 354V464M679 352V444M680 355V464M681 351V442M682 355V443M683 355V444M684 357V444M685 353V441M686 351V464M687 355V464M688 353V444M689 352V441M690 351V439M691 355V443M692 350V443M693 352V464M694 354V466M695 352V441M696 354V444M697 355V440M698 351V442M699 353V443M700 351V464M701 355V439M702 354V464M703 351V443M704 353V441M705 353V440M706 351V444M707 351V464M708 352V444M709 353V464M710 351V444M711 351V443M712 351V439M713 352V443M714 353V440M715 356V464M716 351V466M717 355V440M718 356V443M719 350V444M720 354V443M721 356V444M722 355V464M723 353V439M724 355V464M725 354V442M726 351V439M727 351V439M728 355V443M729 355V464M730 353V440M731 352V464M732 351V444M733 353V439M734 352V439M735 353V441M736 356V443M737 352V442M738 354V464M739 353V440M740 351V466M741 351V445M742 355V464M743 356V442M744 356V442M745 352V443M746 354V441M747 356V441M748 355V440M749 352V461M750 354V461M751 352V440M752 355V442M753 352V445M754 352V445M755 351V443M756 352V439M757 355V438M758 351V443M759 353V464M760 354V440M761 353V445M762 355V464M763 356V441M764 351V444M765 354V464M766 356V439M767 352V442M768 350V445M769 352V464M770 351V439M771 356V442M772 353V464M773 355V439M774 351V443M775 351V464M776 354V443M777 354V464M778 351V439M779 357V440M780 353V464M781 357V444M782 352V442M783 357V445M784 353V464M785 355V464M786 351V464M787 353V440M788 355V445M789 354V439M790 353V439M791 356V442M792 353V443M793 352V441M794 356V443M795 356V442M796 354V464M797 352V440M798 352V464M799 354V439M800 351V443M801 356V440M802 350V440M803 354V444M804 351V464M805 352V439M806 356V464M807 351V439M808 357V440M809 351V440M810 352V445M811 353V445M812 355V439M813 357V444M814 356V445M815 352V440M816 351V440M817 353V439M818 352V445M819 351V438M820 351V442M821 351V442M822 353V443M823 351V439M824 356V442M825 355V441M826 357V444M827 357V444M828 351V442M829 356V443M830 355V441M831 356V445M832 353V441M833 356V443M834 351V444M835 376V423M836 372V421M837 370V427M838 376V420M839 373V424M840 374V425M841 371V426M842 371V427M843 377V426M844 374V428M845 371V423M846 375V422M847 375V420M848 370V425M849 372V427M850 372V422M851 374V419M852 371V428M853 372V427M854 372V424M855 371V422M856 374V424M857 376V424M858 373V428M859 371V426M860 376V421M861 371V419M862 372V429M863 374V426M864 372V426M865 375V419M866 376V422M867 373V425M868 373V426M869 376V420M870 375V420M871 374V428M872 375V427M873 376V422M874 372V423M875 376V428M876 371V419M877 375V427M878 372V422M879 376V428M880 373V425M881 376V420M882 370V423M883 373V421M884 377V427M885 370V423M886 333V466M887 333V466M888 347V435M889 347V435M890 347V435M891 342V437M892 342V437M893 361V433M894 336V438M895 340V435M896 344V435M897 362V434M898 362V433M899 331V438M900 347V457M901 358V433M902 330V435M903 362V451M904 359V434M905 361V438M906 345V439M907 341V448M908 358V439M909 356V434M910 359V456M911 331V436M912 342V456M913 358V434M914 331V447M915 344V453M916 359V439M917 360V457M918 331V435M919 358V439M920 360V435M921 347V440M922 344V438M923 357V434M924 340V439M925 357V435M926 341V440M927 336V439M928 348V450M929 360V438M930 340V454M931 359V440M932 357V455M933 359V439M934 339V435M935 336V448M936 347V441M937 360V450M938 346V453M939 359V451M940 346V438M941 356V436M942 357V436M943 359V435M944 337V449M945 335V449M946 356V449M947 334V436M948 343V440M949 339V457M950 339V436M951 356V446M952 357V449M953 340V440M954 356V436M955 359V451M956 358V436M957 331V449M958 346V436M959 359V436M960 359V449M961 355V442M962 358V439M963 334V448M964 333V447M965 333V437M966 359V441M967 357V450M968 345V438M969 356V457M970 354V441M971 355V452M972 355V438M973 358V443M974 359V442M975 355V450M976 334V446M977 341V438M978 357V441M979 355V439M980 355V442M981 342V457M982 338V443M983 356V437M984 357V438M985 342V444M986 335V452M987 361V432M988 366V427M989 372V465M990 378V417"/><path stroke="#6464dc" d="M133 372V422M134 373V421M135 374V420M136 376V418M137 377V417M138 378V416M139 379V415M140 380V414M141 381V413M142 383V411M143 384V410M144 385V409M145 391V403M146 391V403M147 386V408M148 387V407M149 388V406M150 389V405M151 389V405M152 390V404M153 390V404M154 391V403M155 388V406M156 389V405M157 390V404M158 389V405M159 390V404M160 390V404M161 391V403M162 386V408M163 387V407M164 388V406M165 388V406M166 390V404M167 390V404M168 390V404M169 391V403M170 389V405M171 389V405M172 389V405M173 390V404M174 390V404M175 390V404M176 390V404M177 387V407M178 388V406M179 389V405M180 389V405M181 390V404M182 391V403M183 391V403M184 388V406M185 389V405M186 389V405M187 389V405M188 390V404M189 390V404M190 390V404M191 391V403M192 387V407M193 388V406M194 388V406M195 389V405M196 390V404M197 390V404M198 391V403M199 388V406M200 389V405M201 389V405M202 389V405M203 390V404M204 390V404M205 390V404M206 386V408M207 387V407M208 388V406M209 388V406M210 389V405M211 390V404M212 390V404M213 390V404M214 389V405M215 389V405M216 389V405M217 390V404M218 390V404M219 391V403M220 391V403M221 387V407M222 387V407M223 388V406M224 388V406M225 389V405M226 390V404M227 391V403M228 388V406M229 389V405M230 389V405M231 389V405M232 390V404M233 390V404M234 390V404M235 390V404M236 386V408M237 387V407M238 388V406M239 389V405M240 390V404M241 391V403M242 390V404M243 388V406M244 389V405M245 389V405M246 390V404M247 390V404M248 390V404M249 390V404M250 391V403M251 387V407M252 388V406M253 389V405M254 389V405M255 390V404M256 390V404M257 390V404M258 388V406M259 388V406M260 389V405M261 389V405M262 390V404M263 390V404M264 379V415M265 379V415M266 379V415M267 379V415M268 379V415M269 379V415M270 379V415M271 379V415M272 377V417M273 377V417M274 377V417M275 377V417M276 377V417M277 376V418M278 377V417M279 377V417M280 376V418M281 376V418M282 378V416M283 376V418M284 377V417M285 376V418M286 376V418M287 376V418M288 377V417M289 376V418M290 377V417M291 376V418M292 377V417M293 378V416M294 377V417M295 377V417M296 377V417M297 376V418M298 377V417M299 376V418M300 377V417M301 377V417M302 377V417M303 376V418M304 377V417M305 377V417M306 376V418M307 377V417M308 377V417M309 376V418M310 377V417M311 377V417M312 377V417M313 376V418M314 378V416M315 376V418M316 377V417M317 377V417M318 376V418M319 377V417M320 377V417M321 376V418M322 377V417M323 377V417M324 376V418M325 377V417M326 376V418M327 376V418M328 377V417M329 377V417M330 380V414M331 380V414M332 380V414M333 380V414M334 380V414M335 380V414M336 380V414M337 380V414M338 380V414M339 380V414M340 380V414M341 380V414M342 380V414M343 380V414M344 380V414M345 380V414M346 380V414M347 380V414M348 380V414M349 380V414M350 380V414M351 380V414M352 380V414M353 380V414M354 380V414M355 380V414M356 380V414M357 380V414M358 380V414M359 380V414M360 380V414M361 380V414M362 380V414M363 380V414M364 380V414M365 380V414M366 380V414M367 380V414M368 380V414M369 380V414M370 380V414M371 380V414M372 380V414M373 380V414M374 380V414M375 380V414M376 380V414M377 380V414M378 380V414M379 380V414M380 380V414M381 380V414M382 380V414M383 380V414M384 380V414M385 380V414M386 380V414M387 380V414M388 380V414M389 380V414M390 380V414M391 380V414M392 380V414M393 380V414M394 380V414M395 380V414M396 380V414M397 380V414M398 380V414M399 380V414M400 380V414M401 380V414M402 380V414M403 380V414M404 380V414M405 380V414M406 380V414M407 380V414M408 380V414M409 380V414M410 380V414M411 380V414M412 380V414M413 380V414M414 380V414M415 380V414M416 380V414M417 380V414M418 380V414M419 380V414M420 380V414M421 380V414M422 380V414M423 380V414M424 380V414M425 380V414M426 380V414M427 380V414M428 380V414M429 380V414M430 380V414M431 380V414M432 380V414M433 380V414M434 380V414M435 380V414M436 380V414M437 380V414M438 380V414M439 380V414M440 380V414M441 380V414M442 380V414M443 380V414M444 380V414M445 380V414M446 380V414M447 380V414M448 380V414M449 380V414M450 380V414M451 380V414M452 380V414M453 380V414M454 380V414M455 380V414M456 380V414M457 380V414M458 380V414M459 380V414M460 380V414M461 380V414M462 380V414M463 380V414M464 380V414M465 380V414M466 380V414M467 380V414M468 380V414M469 380V414M470 380V414M471 380V414M472 380V414M473 380V414M474 380V414M475 380V414M476 380V414M477 380V414M478 380V414M479 380V414M480 380V414M481 380V414M482 380V414M483 380V414M484 380V414M485 380V414M486 380V414M487 380V414M488 380V414M489 380V414M490 380V414M491 380V414M492 380V414M493 380V414M494 380V414M495 380V414M496 380V414M497 380V414M498 380V414M499 380V414M500 380V414M501 380V414M502 380V414M503 380V414M504 380V414M505 380V414M506 380V414M507 380V414M508 380V414M509 380V414M510 380V414M511 380V414M512 380V414M513 380V414M514 380V414M515 380V414M516 380V414M517 380V414M518 380V414M519 380V414M520 380V414M521 380V414M522 380V414M523 380V414M524 380V414M525 380V414M526 380V414M527 380V414M528 380V414M529 380V414M530 380V414M531 380V414M532 380V414M533 380V414M534 380V414M535 380V414M536 380V414M537 380V414M538 380V414M539 380V414M540 380V414M541 380V414M542 380V414M543 380V414M544 380V414M545 380V414M546 380V414M547 380V414M548 380V414M549 380V414M550 380V414M551 380V414M552 380V414M553 380V414M554 380V414M555 380V414M556 380V414M557 380V414M558 380V414M559 380V414M560 380V414M561 380V414M562 380V414M563 380V414M564 380V414M565 380V414M566 380V414M567 380V414M568 380V414M569 380V414M570 380V414M571 380V414M572 380V414M573 380V414M574 380V414M575 380V414M576 380V414M577 380V414M578 380V414M579 380V414M580 380V414M581 380V414M582 380V414M583 380V414M584 380V414M585 380V414M586 380V414M587 380V414M588 380V414M589 380V414M590 380V414M591 380V414M592 380V414M593 380V414M594 380V414M595 380V414M596 380V414M597 380V414M598 380V414M599 380V414M600 380V414M601 380V414M602 380V414M603 380V414M604 380V414M605 380V414M606 380V414M607 380V414M608 380V414M609 380V414M610 380V414M611 380V414M612 380V414M613 380V414M614 380V414M615 380V414M616 380V414M617 380V414M618 380V414M619 380V414M620 380V414M621 380V414M622 380V414M623 380V414M624 380V414M625 380V414M626 380V414M627 380V414M628 380V414M629 380V414M630 380V414M631 380V414M632 380V414M633 380V414M634 380V414M635 380V414M636 380V414M637 380V414M638 380V414M639 380V414M640 380V414M641 380V414M642 380V414M643 380V414M644 380V414M645 380V414M646 380V414M647 380V414M648 380V414M649 380V414M650 380V414M651 380V414M652 380V414M653 380V414M654 380V414M655 380V414M656 380V414M657 380V414M658 380V414M659 380V414M660 380V414M661 380V414M662 380V414M663 380V414M664 380V414M665 380V414M666 380V414M667 380V414M668 380V414M669 380V414M670 380V414M671 380V414M672 380V414M673 380V414M674 380V414M675 380V414M676 380V414M677 380V414M678 380V414M679 380V414M680 380V414M681 380V414M682 380V414M683 380V414M684 380V414M685 380V414M686 380V414M687 380V414M688 380V414M689 380V414M690 380V414M691 380V414M692 380V414M693 380V414M694 380V414M695 380V414M696 380V414M697 380V414M698 380V414M699 380V414M700 380V414M701 380V414M702 380V414M703 380V414M704 380V414M705 380V414M706 380V414M707 380V414M708 380V414M709 380V414M710 380V414M711 380V414M712 380V414M713 380V414M714 380V414M715 380V414M716 380V414M717 380V414M718 380V414M719 380V414M720 380V414M721 380V414M722 380V414M723 380V414M724 380V414M725 380V414M726 380V414M727 380V414M728 380V414M729 380V414M730 380V414M731 380V414M732 380V414M733 380V414M734 380V414M735 380V414M736 380V414M737 380V414M738 380V414M739 380V414M740 380V414M741 380V414M742 380V414M743 380V414M744 380V414M745 380V414M746 380V414M747 380V414M748 380V414M749 380V414M750 380V414M751 380V414M752 380V414M753 380V414M754 380V414M755 380V414M756 380V414M757 380V414M758 380V414M759 380V414M760 380V414M761 380V414M762 380V414M763 380V414M764 380V414M765 380V414M766 380V414M767 380V414M768 380V414M769 380V414M770 380V414M771 380V414M772 380V414M773 380V414M774 380V414M775 380V414M776 380V414M777 380V414M778 380V414M779 380V414M780 380V414M781 380V414M782 380V414M783 380V414M784 380V414M785 380V414M786 380V414M787 380V414M788 380V414M789 380V414M790 380V414M791 380V414M792 380V414M793 380V414M794 380V414M795 380V414M796 380V414M797 380V414M798 380V414M799 380V414M800 380V414M801 380V414M802 380V414M803 380V414M804 380V414M805 380V414M806 380V414M807 380V414M808 380V414M809 380V414M810 380V414M811 380V414M812 380V414M813 380V414M814 380V414M815 380V414M816 380V414M817 380V414M818 380V414M819 380V414M820 380V414M821 380V414M822 380V414M823 380V414M824 380V414M825 380V414M826 380V414M827 380V414M828 380V414M829 380V414M830 380V414M831 380V414M832 380V414M833 380V414M834 380V414M835 388V406M836 388V406M837 389V405M838 388V406M839 388V406M840 388V406M841 388V406M842 388V406M843 388V406M844 388V406M845 388V406M846 388V406M847 388V406M848 387V407M849 387V407M850 388V406M851 388V406M852 388V406M853 387V407M854 389V405M855 388V406M856 387V407M857 388V406M858 388V406M859 387V407M860 388V406M861 388V406M862 388V406M863 388V406M864 388V406M865 388V406M866 387V407M867 388V406M868 388V406M869 389V405M870 389V405M871 388V406M872 388V406M873 388V406M874 388V406M875 388V406M876 388V406M877 388V406M878 389V405M879 389V405M880 388V406M881 389V405M882 388V406M883 389V405M884 389V405M885 388V406M886 383V411M887 383V411M888 383V411M889 383V411M890 383V411M891 384V410M892 384V410M893 384V410M894 384V410M895 384V410M896 384V410M897 384V410M898 383V411M899 384V410M900 384V410M901 384V410M902 384V410M903 383V411M904 384V410M905 383V411M906 383V411M907 383V411M908 384V410M909 383V411M910 384V410M911 384V410M912 384V410M913 383V411M914 384V410M915 384V410M916 383V411M917 384V410M918 384V410M919 383V411M920 383V411M921 383V411M922 383V411M923 383V411M924 383V411M925 384V410M926 383V411M927 384V410M928 383V411M929 384V410M930 384V410M931 383V411M932 384V410M933 383V411M934 384V410M935 384V410M936 383V411M937 383V411M938 383V411M939 384V410M940 383V411M941 384V410M942 383V411M943 384V410M944 383V411M945 383V411M946 383V411M947 383V411M948 384V410M949 383V411M950 383V411M951 383V411M952 383V411M953 382V412M954 383V411M955 383V411M956 383V411M957 383V411M958 383V411M959 383V411M960 383V411M961 383V411M962 383V411M963 383V411M964 383V411M965 383V411M966 382V412M967 383V411M968 383V411M969 382V412M970 383V411M971 383V411M972 382V412M973 383V411M974 383V411M975 383V411M976 383V411M977 382V412M978 382V412M979 383V411M980 383V411M981 382V412M982 382V412M983 382V412M984 383V411M985 382V412M986 383V411M987 384V410M988 385V409M989 387V407M990 388V406"/></g></svg>
<!-- label panel content -->
<div class="a" style="left:6px;top:187px;width:14px;height:4px;background:#dddde8;border-bottom:1px solid #9a9aa8;border-right:1px solid #9a9aa8"></div>
<div class="a" style="left:21px;top:187px;width:79px;height:4px;background:#dddde8;border-bottom:1px solid #9a9aa8"></div>
<div class="a" style="left:25px;top:187px;width:4px;height:2px;background:#222"></div><div class="a" style="left:45px;top:187px;width:33px;height:1.5px;background:#333"></div>
<div class="a" style="left:113px;top:187px;width:2px;height:1.5px;background:#222"></div><div class="a" style="left:118px;top:187px;width:4px;height:1.5px;background:#222"></div>
<div class="a" style="left:7.5px;top:193.5px;font-size:11px;line-height:15px;white-space:nowrap">Стерео, 44100Hz<br>32-bit float</div>
<div class="a" style="left:6px;top:226px;width:46px;height:15px;border:1px solid #fff;border-right-color:#8a8b99;border-bottom-color:#8a8b99;font-size:11px;line-height:13px;text-align:center;text-indent:-3px;letter-spacing:-.1px">Тихо</div>
<div class="a" style="left:53px;top:226px;width:47px;height:15px;border:1px solid #fff;border-right-color:#8a8b99;border-bottom-color:#8a8b99;font-size:11px;line-height:13px;text-align:center;text-indent:-3px;letter-spacing:-.2px">Соло</div>
<div class="a" style="left:17px;top:251px;width:4px;height:1px;background:#000"></div>
<div class="a" style="left:85px;top:251px;width:5px;height:1px;background:#000"></div><div class="a" style="left:87px;top:249px;width:1px;height:5px;background:#000"></div>
<div class="a" style="left:16.5px;top:254px;width:1px;height:7px;background:#f0f0f8"></div><div class="a" style="left:23.7px;top:256px;width:1px;height:5px;background:#f0f0f8"></div><div class="a" style="left:30.9px;top:256px;width:1px;height:5px;background:#f0f0f8"></div><div class="a" style="left:38.1px;top:256px;width:1px;height:5px;background:#f0f0f8"></div><div class="a" style="left:45.3px;top:256px;width:1px;height:5px;background:#f0f0f8"></div><div class="a" style="left:52.5px;top:256px;width:1px;height:5px;background:#f0f0f8"></div><div class="a" style="left:59.7px;top:256px;width:1px;height:5px;background:#f0f0f8"></div><div class="a" style="left:66.9px;top:256px;width:1px;height:5px;background:#f0f0f8"></div><div class="a" style="left:74.1px;top:256px;width:1px;height:5px;background:#f0f0f8"></div><div class="a" style="left:81.3px;top:256px;width:1px;height:5px;background:#f0f0f8"></div><div class="a" style="left:88.5px;top:254px;width:1px;height:7px;background:#f0f0f8"></div><div class="a" style="left:16px;top:259px;width:74px;height:2px;background:rgba(255,255,255,.28)"></div><div class="a" style="left:16px;top:261px;width:74px;height:1px;background:#8f90a0"></div><svg class="a" style="left:47px;top:253px" width="14" height="17"><path d="M2.5 1.5H10.5Q11.5 1.5 11.5 2.5V9.5L6.5 15.5L1.5 9.5V2.5Q1.5 1.5 2.5 1.5Z" fill="#d3d6ea" stroke="#15161e" stroke-width="1.1"/><path d="M4.5 6.5H8.5M4.5 9H8.5" stroke="#f2f3fa"/></svg>
<div class="a" style="left:16px;top:275.5px;font-size:10px">Л</div><div class="a" style="left:83px;top:275.5px;font-size:10px">П</div>
<div class="a" style="left:16.5px;top:284px;width:1px;height:7px;background:#f0f0f8"></div><div class="a" style="left:23.7px;top:286px;width:1px;height:5px;background:#f0f0f8"></div><div class="a" style="left:30.9px;top:286px;width:1px;height:5px;background:#f0f0f8"></div><div class="a" style="left:38.1px;top:286px;width:1px;height:5px;background:#f0f0f8"></div><div class="a" style="left:45.3px;top:286px;width:1px;height:5px;background:#f0f0f8"></div><div class="a" style="left:52.5px;top:286px;width:1px;height:5px;background:#f0f0f8"></div><div class="a" style="left:59.7px;top:286px;width:1px;height:5px;background:#f0f0f8"></div><div class="a" style="left:66.9px;top:286px;width:1px;height:5px;background:#f0f0f8"></div><div class="a" style="left:74.1px;top:286px;width:1px;height:5px;background:#f0f0f8"></div><div class="a" style="left:81.3px;top:286px;width:1px;height:5px;background:#f0f0f8"></div><div class="a" style="left:88.5px;top:284px;width:1px;height:7px;background:#f0f0f8"></div><div class="a" style="left:16px;top:289px;width:74px;height:2px;background:rgba(255,255,255,.28)"></div><div class="a" style="left:16px;top:291px;width:74px;height:1px;background:#8f90a0"></div><svg class="a" style="left:47px;top:283px" width="14" height="17"><path d="M2.5 1.5H10.5Q11.5 1.5 11.5 2.5V9.5L6.5 15.5L1.5 9.5V2.5Q1.5 1.5 2.5 1.5Z" fill="#d3d6ea" stroke="#15161e" stroke-width="1.1"/><path d="M4.5 6.5H8.5M4.5 9H8.5" stroke="#f2f3fa"/></svg>
<div class="a" style="left:23px;top:452px;width:62px;height:16px;border:1px solid #fff;border-right-color:#9a9bab;border-bottom:0"></div>
<svg class="a" style="left:48px;top:457px" width="13" height="8"><path d="M1.5 6.5L6.5 1.5L11.5 6.5Z" fill="#9b9ca8" stroke="#222" stroke-width="1"/></svg>
<svg class="a" style="left:86px;top:453px" width="14" height="14"><circle cx="6.5" cy="7" r="5" fill="#fff" stroke="#111" stroke-width="1.3"/><path d="M6.5 3.5V7H9.5" stroke="#111" fill="none"/><path d="M5 1H8" stroke="#111"/></svg>
<!-- vruler labels -->
<div id="vr" class="a" style="left:101px;top:0;width:31px;font-size:11px">
<div class="a" style="left:0;top:207px;width:24px;text-align:right;line-height:12px;">0,5</div>
<div class="a" style="left:26px;top:213px;width:4px;height:1px;background:#000"></div>
<div class="a" style="left:0;top:242px;width:24px;text-align:right;line-height:12px;font-weight:bold;">0,0</div>
<div class="a" style="left:26px;top:248px;width:4px;height:1px;background:#000"></div>
<div class="a" style="left:0;top:278px;width:24px;text-align:right;line-height:12px;">-0,5</div>
<div class="a" style="left:26px;top:282px;width:4px;height:1px;background:#000"></div>
<div class="a" style="left:0;top:306px;width:24px;text-align:right;line-height:12px;font-weight:bold;">-1,0</div>
<div class="a" style="left:26px;top:316px;width:4px;height:1px;background:#000"></div>
<div class="a" style="left:0;top:327px;width:24px;text-align:right;line-height:12px;font-weight:bold;">1,0</div>
<div class="a" style="left:26px;top:328px;width:4px;height:1px;background:#000"></div>
<div class="a" style="left:0;top:356px;width:24px;text-align:right;line-height:12px;">0,5</div>
<div class="a" style="left:26px;top:362px;width:4px;height:1px;background:#000"></div>
<div class="a" style="left:0;top:391px;width:24px;text-align:right;line-height:12px;font-weight:bold;">0,0</div>
<div class="a" style="left:26px;top:397px;width:4px;height:1px;background:#000"></div>
<div class="a" style="left:0;top:427px;width:24px;text-align:right;line-height:12px;">-0,5</div>
<div class="a" style="left:26px;top:432px;width:4px;height:1px;background:#000"></div>
<div class="a" style="left:0;top:455px;width:24px;text-align:right;line-height:12px;font-weight:bold;">-1,0</div>
<div class="a" style="left:26px;top:466px;width:4px;height:1px;background:#000"></div>
</div>

<!-- v scrollbar -->
<div class="a" style="left:1007px;top:186px;width:17px;height:286px;background:#f4f3ee"></div>
<div class="a" style="left:1008px;top:187px;width:16px;height:16px;border-radius:2px;background:linear-gradient(90deg,#c8d6fb,#b6c9f7);border:1px solid #fff"><svg class="a" style="left:2px;top:3px" width="10" height="7"><path d="M1 6L5 2L9 6" stroke="#3d5282" stroke-width="2.3" fill="none"/></svg></div>
<div class="a" style="left:1008px;top:455px;width:16px;height:16px;border-radius:2px;background:linear-gradient(90deg,#c8d6fb,#b6c9f7);border:1px solid #fff"><svg class="a" style="left:2px;top:4px" width="10" height="7"><path d="M1 1L5 5L9 1" stroke="#3d5282" stroke-width="2.3" fill="none"/></svg></div>
<div class="a" style="left:1008px;top:217px;width:16px;height:213px;border-radius:2px;background:linear-gradient(90deg,#c9d7fc,#bacdf8 60%,#aec2f2);border:1px solid #fff;box-shadow:0 1px 0 #98b1e4"><div class="a" style="left:4px;top:101px;width:6px;height:8px;background:repeating-linear-gradient(#eef3ff 0,#eef3ff 1px,#8ea7de 1px,#8ea7de 2px)"></div></div>

<div class="a" style="left:0;top:186px;width:1024px;height:1px;background:#000"></div>
<!-- h scrollbar -->
<div class="a" style="left:0;top:472px;width:1024px;height:18px;background:#ece9d8"></div>
<div class="a" style="left:137px;top:474px;width:871px;height:16px;background:#f4f3ee"></div>
<div class="a" style="left:137px;top:474px;width:16px;height:16px;border-radius:2px;background:linear-gradient(#c8d6fb,#b6c9f7);border:1px solid #fff"><svg class="a" style="left:3px;top:2px" width="7" height="10"><path d="M6 1L2 5L6 9" stroke="#3d5282" stroke-width="2.3" fill="none"/></svg></div>
<div class="a" style="left:991px;top:474px;width:16px;height:16px;border-radius:2px;background:linear-gradient(#c8d6fb,#b6c9f7);border:1px solid #fff"><svg class="a" style="left:4px;top:2px" width="7" height="10"><path d="M1 1L5 5L1 9" stroke="#3d5282" stroke-width="2.3" fill="none"/></svg></div>
<div class="a" style="left:154px;top:474px;width:675px;height:16px;border-radius:2px;background:linear-gradient(#c9d7fc,#bacdf8 60%,#aec2f2);border:1px solid #fff;box-shadow:1px 0 0 #98b1e4"><div class="a" style="left:333px;top:4px;width:8px;height:6px;background:repeating-linear-gradient(90deg,#eef3ff 0,#eef3ff 1px,#8ea7de 1px,#8ea7de 2px)"></div></div>

<!-- ===== selection toolbar ===== -->
<div class="a tbar" style="left:1px;top:490px;width:1023px;height:57px;border-bottom-color:#aca899"></div>
<div class="a grab" style="left:2px;top:492px;width:9px;height:53px"></div>
<div class="a" style="left:13px;top:498px;font-size:12.2px;white-space:nowrap" id="l1">Частота проекта (Гц):</div>
<div class="a combo" style="left:12px;top:515px;width:80px;height:22px"><span class="a" style="left:6px;top:2.5px;font-size:12.2px;letter-spacing:.1px">44100</span><div class="dd"><svg class="a" style="left:2px;top:6px" width="10" height="7"><path d="M1 1L5 5L9 1" stroke="#3d5282" stroke-width="2.3" fill="none"/></svg></div></div>
<div class="a" style="left:140px;top:512px;width:1px;height:27px;background:#aca899"></div><div class="a" style="left:141px;top:512px;width:1px;height:27px;background:#fff"></div>
<div class="a" style="left:150px;top:519px;font-size:12.2px;letter-spacing:.14px;white-space:nowrap" id="l2">Прилипать к линейке</div>
<div class="a" style="left:276px;top:519px;width:13px;height:13px;border:1px solid #1c5180;background:linear-gradient(135deg,#dcdcd4,#fff)"></div>
<div class="a" style="left:295px;top:498px;font-size:12.2px;white-space:nowrap" id="l3">Начало выделения:</div>
<div class="a" style="left:451px;top:498px;width:13px;height:13px;border-radius:50%;border:1px solid #1c5180;background:radial-gradient(circle,#3fb83f 0,#2a9a2a 2.4px,#f4f4ee 3.2px,#e0e0d8 6px)"></div>
<div class="a" style="left:467px;top:498px;font-size:12.2px;white-space:nowrap" id="l4">Конец</div>
<div class="a" style="left:510px;top:498px;width:13px;height:13px;border-radius:50%;border:1px solid #1c5180;background:radial-gradient(circle at 60% 60%,#fff 0,#e4e4dc 6px)"></div>
<div class="a" style="left:526px;top:498px;font-size:12.2px;white-space:nowrap" id="l5">Длительность</div>
<div class="a" style="left:622px;top:498px;font-size:12.2px;white-space:nowrap" id="l6">Текущая позиция:</div>
<div class="a" style="left:612px;top:512px;width:1px;height:27px;background:#aca899"></div><div class="a" style="left:613px;top:512px;width:1px;height:27px;background:#fff"></div>
<div class="tc" style="left:295.3px;top:516px;width:148px"><b style="left:1.6px">0</b><b style="left:11.4px">0</b><b style="left:36.8px">0</b><b style="left:46.6px">0</b><b style="left:73.0px">0</b><b style="left:82.6px">0</b><b style="left:96.9px">0</b><b style="left:106.7px">0</b><b style="left:116.5px">0</b><b style="left:92.5px;width:4px;background:none">,</b><span class="k" style="left:26.1px">ч</span><span class="k" style="left:60.5px">м</span><span class="k" style="left:130.0px">с</span><div class="d"><svg class="a" style="left:1px;top:6px" width="8" height="5"><path d="M0 0H8L4 5Z" fill="#000"/></svg></div></div><div class="tc" style="left:451.2px;top:516px;width:148px"><b style="left:1.6px">0</b><b style="left:11.4px">0</b><b style="left:36.8px">0</b><b style="left:46.6px">0</b><b style="left:73.0px">0</b><b style="left:82.6px">0</b><b style="left:96.9px">0</b><b style="left:106.7px">0</b><b style="left:116.5px">0</b><b style="left:92.5px;width:4px;background:none">,</b><span class="k" style="left:26.1px">ч</span><span class="k" style="left:60.5px">м</span><span class="k" style="left:130.0px">с</span><div class="d"><svg class="a" style="left:1px;top:6px" width="8" height="5"><path d="M0 0H8L4 5Z" fill="#000"/></svg></div></div><div class="tc" style="left:622.2px;top:516px;width:148px"><b style="left:1.6px">0</b><b style="left:11.4px">0</b><b style="left:36.8px">0</b><b style="left:46.6px">0</b><b style="left:73.0px">0</b><b style="left:82.6px">0</b><b style="left:96.9px">0</b><b style="left:106.7px">0</b><b style="left:116.5px">0</b><b style="left:92.5px;width:4px;background:none">,</b><span class="k" style="left:26.1px">ч</span><span class="k" style="left:60.5px">м</span><span class="k" style="left:130.0px">с</span><div class="d"><svg class="a" style="left:1px;top:6px" width="8" height="5"><path d="M0 0H8L4 5Z" fill="#000"/></svg></div></div>

<!-- status bar -->
<div class="a" style="left:0;top:547px;width:1024px;height:23px;background:#ece9d8;border-top:1px solid #fff"></div>
<div class="a" style="left:682px;top:550px;width:1px;height:18px;background:#c5c2b2"></div><div class="a" style="left:683px;top:550px;width:1px;height:18px;background:#fff"></div>


<!-- ===== dialog ===== -->
<div class="a" id="dlg" style="left:286px;top:75px;width:549px;height:375px;border-radius:8px 8px 0 0;background:linear-gradient(90deg,#0424c8 0,#0a45e0 1px,#1664ee 2px,#0a50dc 3px,#0a50dc 546px,#0a45dc 547px,#0434cc 548px,#001aa8 549px);overflow:hidden">
  <div class="a" style="left:0;top:371px;width:549px;height:4px;background:linear-gradient(#0a3cd0 0,#0832c4 1px,#0628b4 2px,#041ea4 3px,#001488 4px)"></div>
  <div class="a" style="left:0;top:0;width:549px;height:30px;background:linear-gradient(#0831d9 0,#0a45de 1px,#2a7ef6 2.5px,#1468f2 4px,#0558e8 6px,#0355e4 9px,#0354e3 18px,#0562f0 24px,#0556e0 27px,#0046c8 30px)"></div>
  <div class="a" style="left:0;top:0;width:549px;height:30px;border-radius:8px 8px 0 0;box-shadow:inset 1px 0 0 #0a3fd2,inset -1px 0 0 #0a3fd2"></div>
  <div class="a" style="left:7px;top:11px;font-weight:bold;font-size:13px;color:#fff;text-shadow:1px 1px 0 #0a2a8a;letter-spacing:-.1px;white-space:nowrap" id="dt">Правка метаданных</div>
  <div class="a" style="left:522px;top:6px;width:21px;height:21px;border:1px solid #fff;border-radius:3px;background:radial-gradient(circle at 30% 25%,#e8866a 0,#d8512f 45%,#c23c1d 100%)">
    <svg class="a" style="left:3px;top:3px" width="13" height="13"><path d="M2 2L11 11M11 2L2 11" stroke="#fff" stroke-width="2.2"/></svg>
  </div>
  <!-- client -->
  <div class="a" style="left:4px;top:29px;width:541px;height:342px;background:#ece9d8"></div>
  <div class="a" style="left:7px;top:35.5px;font-size:11px;letter-spacing:-.06px;white-space:nowrap" id="hint">Use arrow keys (or ENTER key after editing) to navigate fields.</div>
  <!-- grid -->
  <div class="a" style="left:9px;top:59px;width:530px;height:170px;border-top-width:2px;border-top-color:#9d9a8a;background:#fff;border:1px solid #7a7869;border-right-color:#fff;border-bottom-color:#fff;overflow:hidden">
    <div class="a" style="left:0;top:0;width:529px;height:17px;background:#ece9d8"></div>
    <div class="a" style="left:0;top:0;width:126px;height:17px;border-right:1px solid #aca899;border-bottom:1px solid #aca899;font-weight:bold;text-align:center;line-height:18px;box-shadow:inset 1px 1px 0 #fff">Поле</div>
    <div class="a" style="left:126px;top:0;width:376px;height:17px;border-right:1px solid #aca899;border-bottom:1px solid #aca899;font-weight:bold;text-align:center;line-height:18px;box-shadow:inset 1px 1px 0 #fff">Значение</div>
    <div class="row" style="top:17px"><i>Исполнитель</i><u>GAARA54</u></div>
    <div class="row" style="top:34px"><i>Название дорожки</i><u>Dead Love (Demo v. 0.1)</u></div>
    <div class="row" style="top:51px"><i>Название альбома</i><u>Home Made</u></div>
    <div class="row" style="top:68px"><i>Номер дорожки</i><u>07</u></div>
    <div class="row" style="top:85px"><i>Год</i><u>2014</u></div>
    <div class="row" style="top:102px"><i>Жанр</i><u>Instrumental Improvisation</u></div>
    <div class="row" style="top:119px"><i>Комментарии</i><u>Made by GAARA54</u></div>
    <div class="row" style="top:136px"></div>
    <div class="a" style="left:125px;top:17px;width:1px;height:136px;background:#c0c0c0"></div>
    <div class="a" style="left:501px;top:17px;width:1px;height:136px;background:#c0c0c0"></div>
    <div class="a" style="left:0;top:17px;width:126px;height:17px;border:2px solid #000;border-width:1px 2px 2px 1px"></div>
  </div>
  <div class="xpbtn" style="left:146px;top:240px;width:73px">Добавить</div>
  <div class="xpbtn" style="left:231px;top:240px;width:73px">Удалить</div>
  <div class="xpbtn" style="left:329px;top:240px;width:73px">Очистить</div>
  <div class="grp" style="left:8px;top:278px;width:181px;height:49px"><b>Жанры</b></div>
  <div class="grp" style="left:198px;top:278px;width:342px;height:49px"><b>Шаблон</b></div>
  <div class="xpbtn" style="left:19px;top:295px;width:73px">Изменить</div>
  <div class="xpbtn" style="left:104px;top:295px;width:73px">Сбросить</div>
  <div class="xpbtn" style="left:209px;top:295px;width:79px">Загрузить...</div>
  <div class="xpbtn" style="left:301px;top:295px;width:83px">Сохранить...</div>
  <div class="xpbtn" style="left:409px;top:295px;width:120px">Использовать везде</div>
  <div class="xpbtn" style="left:380px;top:340px;width:73px;box-shadow:inset 0 0 0 2px #b9cff4,inset 0 -1px 0 2px #92b0e8">OK</div>
  <div class="xpbtn" style="left:461px;top:340px;width:73px">Отменить</div>
</div>

<!-- ===== taskbar ===== -->
<div class="a" style="left:0;top:570px;width:1024px;height:30px;background:linear-gradient(#3f8cf3 0,#2a6ff0 2px,#245edc 5px,#245edb 22px,#2258d0 26px,#1941a5 30px)"></div>
<div class="a" style="left:0;top:570px;width:96px;height:30px;border-radius:0 5px 5px 0/0 15px 15px 0;background:linear-gradient(#378f37 0,#72c672 1.5px,#4fae4f 4px,#40a040 8px,#3e9c3e 18px,#379137 24px,#2c7a2c 28px,#246a24 30px);box-shadow:inset -7px 0 7px -3px rgba(20,80,20,.75),inset 3px 0 4px -2px rgba(20,80,20,.6),1px 0 2px rgba(0,0,80,.5)"></div>
<svg class="a" style="left:10px;top:575px" width="21" height="20" viewBox="-0.5 1 18.5 16" stroke="rgba(20,30,20,.45)" stroke-width=".7">
  <path d="M2.5 3.5C5 2 7 2.2 9 3.3L7.6 8.2C5.6 7.2 3.6 7.2 1.2 8.4Z" fill="#e8502a"/>
  <path d="M10 3.6C12.2 4.8 14.4 4.8 17 3.4L15.6 8.4C13.2 9.6 11 9.6 8.7 8.5Z" fill="#6dc043"/>
  <path d="M1 9.6C3.4 8.4 5.4 8.4 7.4 9.4L6 14.3C4 13.2 2 13.2 -0.3 14.5Z" fill="#3a8cf0"/>
  <path d="M8.5 9.7C10.7 10.8 12.9 10.8 15.4 9.6L14 14.6C11.6 15.8 9.4 15.8 7.1 14.7Z" fill="#f8c030"/>
</svg>
<div class="a" style="left:34.5px;top:575.5px;font-size:17px;font-weight:bold;font-style:italic;color:#fff;text-shadow:1px 1px 1px #1a4a1a;letter-spacing:-.5px" id="st">пуск</div>

<div class="tskb" style="left:106px;width:158px"><span class="a" style="left:28px">MyGTP - Mozilla Firefox</span>
  <svg class="a" style="left:10px;top:4px" width="16" height="16"><circle cx="8" cy="8" r="7" fill="#e3601a"/><circle cx="9.3" cy="6.6" r="4.6" fill="#3566cc"/><circle cx="10.3" cy="5.3" r="2" fill="#6fa0ee"/><path d="M1.2 8.5C1.2 4 4.5 1.3 8 1.2C5.5 2.5 5 4.5 6.3 6C4.5 6.5 4.5 9 6.5 10.5C8.5 12 11.5 11.5 13.5 9.5C13.5 13 10.5 15 8 15C4.5 15 1.2 12.5 1.2 8.5Z" fill="#f39a22"/></svg></div>
<div class="tskb" style="left:265px;width:159px"><span class="a" style="left:29px">Home Made</span>
  <svg class="a" style="left:10px;top:5px" width="16" height="14"><path d="M1 2.5H6L7.5 4H15V13H1Z" fill="#f6d66a" stroke="#b4902a" stroke-width="1"/><path d="M1.5 5.5H14.5" stroke="#fff3b5"/></svg></div>
<div class="tskb" style="left:426px;width:159px;background:linear-gradient(#1946a8 0,#1c4db8 4px,#1f53c0 19px,#2158c6 23px);box-shadow:inset 1px 1px 2px rgba(0,0,60,.6)"><span class="a" style="left:29px">07 - Dead Love</span>
  <svg class="a" style="left:10px;top:4px" width="15" height="15" viewBox="0 0 17 16">
    <path d="M1.5 11 C0.5 3 4 0.8 8.5 0.8 C13 0.8 16.5 3 15.5 11" fill="none" stroke="#14145a" stroke-width="2.4"/>
    <ellipse cx="8.5" cy="9" rx="4.6" ry="5.6" fill="#f6c62a"/><ellipse cx="8.5" cy="9.5" rx="2.8" ry="2.2" fill="#e8502a"/>
    <rect x="0.5" y="7" width="3.2" height="6.5" rx="1.5" fill="#14145a"/><rect x="13.3" y="7" width="3.2" height="6.5" rx="1.5" fill="#14145a"/></svg></div>
<div class="a" style="left:842px;top:579.5px;color:#fff;font-size:11px">RU</div>
<!-- tray -->
<div class="a" style="left:877px;top:570px;width:147px;height:30px;background:linear-gradient(#48b4f8 0,#1a94ec 2px,#1290e8 5px,#1290e8 22px,#0f7fd6 27px,#0b62b6 30px);box-shadow:inset 1px 0 0 #0c3f9a,inset 2px 0 0 #3fa6f0"></div>
<div class="a" style="left:869px;top:577px;width:17px;height:17px;border-radius:50%;background:radial-gradient(circle at 40% 35%,#8fc4ff,#3f86ee 60%,#2a66d0);box-shadow:0 0 0 1px rgba(255,255,255,.35)"><svg class="a" style="left:4px;top:3px" width="8" height="11"><path d="M6.5 1.5L2.5 5.5L6.5 9.5" stroke="#fff" stroke-width="2" fill="none"/></svg></div>
<div class="a" style="left:888px;top:577px;width:16px;height:16px;border-radius:50%;background:radial-gradient(circle at 60% 40%,#fbe3a0,#f4a030 60%,#e07a18)"><div class="a" style="left:0;top:5px;width:10px;height:10px;border-radius:50%;background:#d02020"><svg class="a" style="left:2px;top:2px" width="6" height="6"><path d="M1 1L5 5M5 1L1 5" stroke="#fff" stroke-width="1.5"/></svg></div></div>
<svg class="a" style="left:906px;top:576px" width="18" height="18"><rect x="1" y="4" width="7" height="8" fill="#cfe0ff" stroke="#5f86c8"/><rect x="0" y="13" width="9" height="2" fill="#e8eef8"/><path d="M10 6C11 8 11 9 10 11M12.5 4.5C14 7 14 10 12.5 12.5M15 3C17 6.5 17 10.5 15 14" stroke="#4fe060" stroke-width="1.4" fill="none"/></svg>
<svg class="a" style="left:925px;top:577px" width="16" height="17"><rect x="0.5" y="0.5" width="14" height="10" fill="#8a8a8a" stroke="#3a3a3a"/><rect x="1" y="12" width="5" height="4" fill="#555"/><rect x="9" y="12" width="5" height="4" fill="#555"/></svg>
<svg class="a" style="left:942px;top:576px" width="17" height="18"><circle cx="7" cy="8" r="6" fill="#6a6a6a" stroke="#c8c8c8" stroke-width="1.5"/><circle cx="6" cy="7" r="2.5" fill="#2a2a2a"/><path d="M11 12L16 16" stroke="#5fa0f0" stroke-width="1.5"/></svg>
<svg class="a" style="left:960px;top:576px" width="16" height="18"><path d="M8 1L15 3.5C15 10 12 14.5 8 17C4 14.5 1 10 1 3.5Z" fill="#d82a2a" stroke="#8a1515"/><path d="M5 6L11 12M11 6L5 12" stroke="#fff" stroke-width="2"/></svg>
<div class="a" style="left:982px;top:579.5px;color:#fff;font-size:11px">18:14</div>

</div>

</body></html>
